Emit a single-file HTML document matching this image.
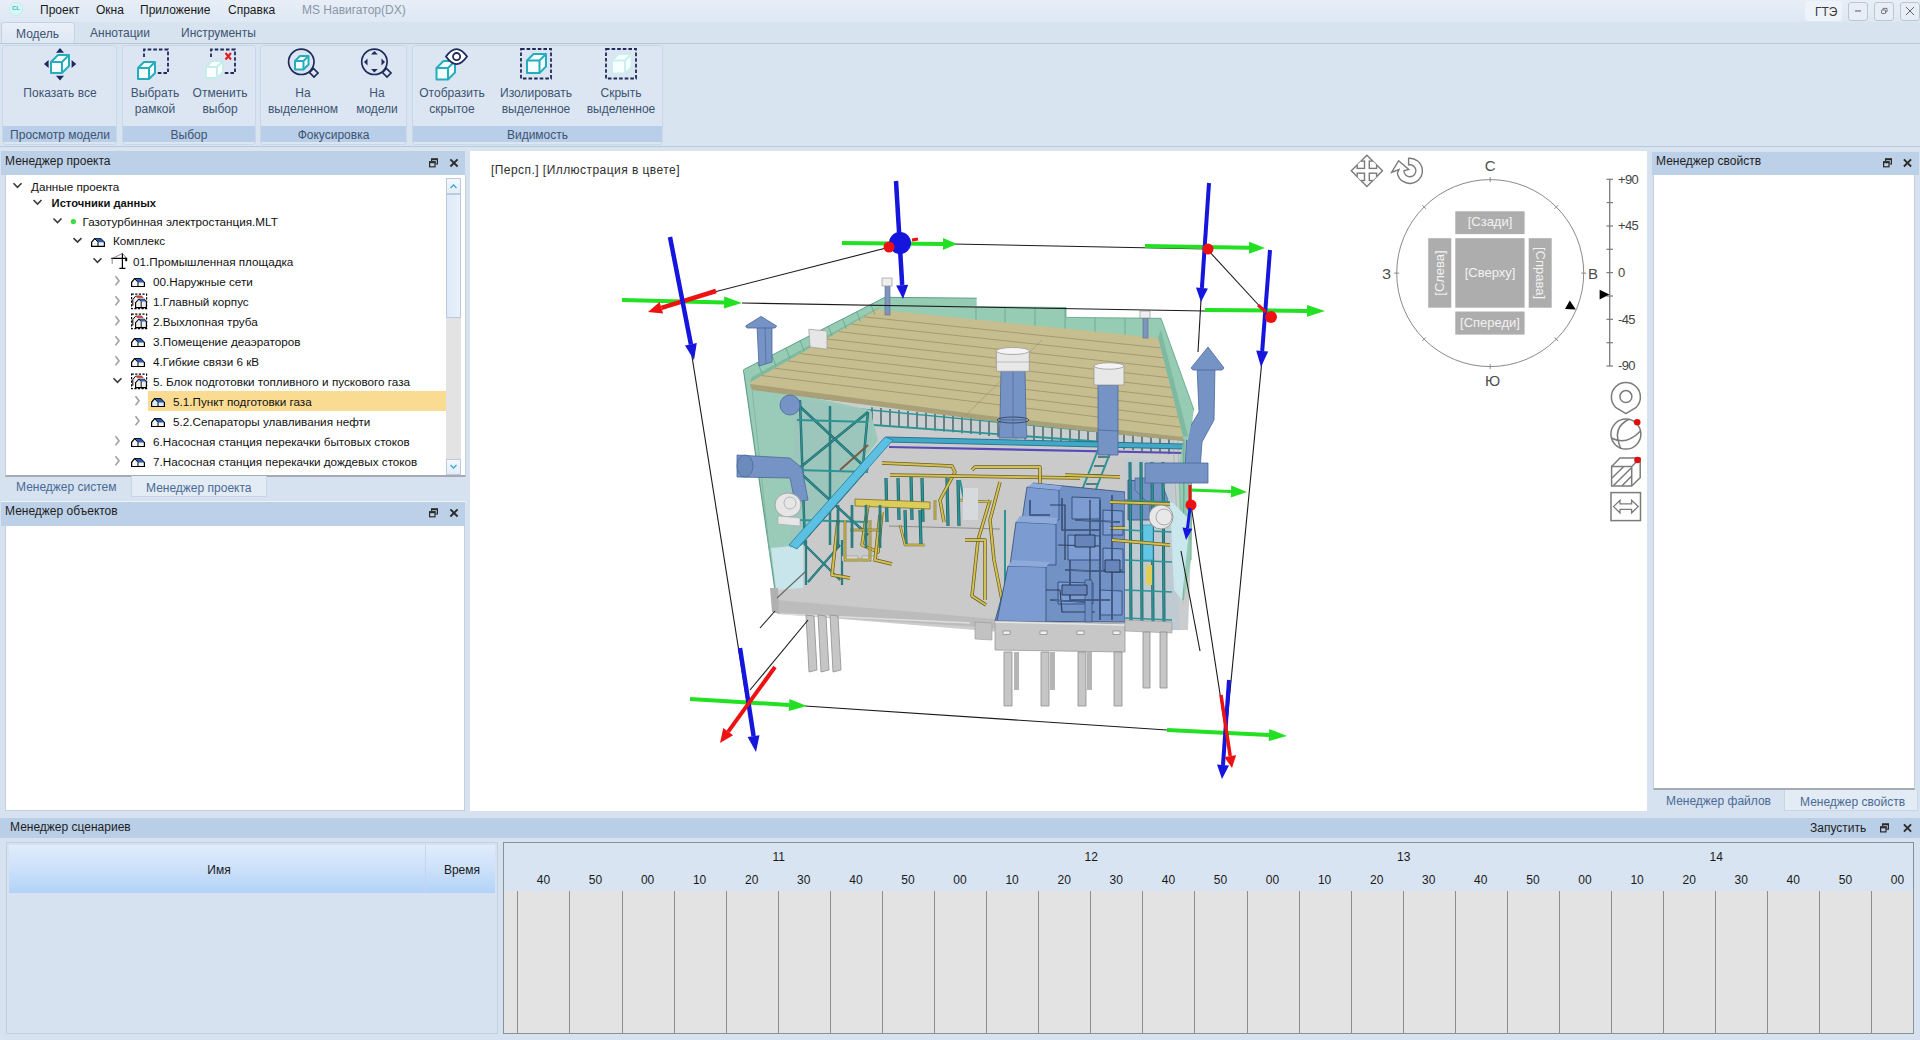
<!DOCTYPE html>
<html><head><meta charset="utf-8">
<style>
*{margin:0;padding:0;box-sizing:border-box}
html,body{width:1920px;height:1040px;overflow:hidden}
body{position:relative;background:#d6e2f0;font-family:"Liberation Sans",sans-serif;font-size:12px;color:#1e1e1e}
.a{position:absolute}
.t{position:absolute;white-space:nowrap;line-height:14px}
svg{position:absolute;overflow:visible}
</style></head><body>

<!-- title bar -->
<div class="a" style="left:0;top:0;width:1920px;height:22px;background:linear-gradient(#e8eef7,#dde8f4)"></div>
<div class="a" style="left:9px;top:2px;width:14px;height:14px;border-radius:50%;background:#d8f6f6;border:1px solid #bfeeee"></div>
<div class="t" style="left:12px;top:4px;font-size:6px;line-height:8px;color:#39b7c2;font-weight:bold">CL</div>
<div class="t" style="left:40px;top:3px;color:#1a1a1a">Проект</div>
<div class="t" style="left:96px;top:3px;color:#1a1a1a">Окна</div>
<div class="t" style="left:140px;top:3px;color:#1a1a1a">Приложение</div>
<div class="t" style="left:228px;top:3px;color:#1a1a1a">Справка</div>
<div class="t" style="left:302px;top:3px;color:#8a96a6">MS Навигатор(DX)</div>
<div class="a" style="left:1805px;top:1px;width:37px;height:20px;background:#eef3fa;border-radius:3px"></div>
<div class="t" style="left:1815px;top:5px;color:#3a3a3a">ГТЭ</div>
<div class="a" style="left:1848px;top:2px;width:20px;height:19px;border:1px solid #bcc6d1;border-radius:3px;background:#e8eef7"></div>
<div class="a" style="left:1874px;top:2px;width:20px;height:19px;border:1px solid #bcc6d1;border-radius:3px;background:#e8eef7"></div>
<div class="a" style="left:1900px;top:2px;width:20px;height:19px;border:1px solid #bcc6d1;border-radius:3px;background:#e8eef7"></div>

<!-- tab bar -->
<div class="a" style="left:0;top:22px;width:1920px;height:22px;background:#d8e3f0"></div>
<div class="a" style="left:1px;top:22px;width:74px;height:22px;background:linear-gradient(#e9eff8,#dde7f3);border:1px solid #c5d3e4;border-bottom:none;border-radius:3px 3px 0 0"></div>
<div class="t" style="left:16px;top:27px;color:#3d5472">Модель</div>
<div class="t" style="left:90px;top:26px;color:#3d5472">Аннотации</div>
<div class="t" style="left:181px;top:26px;color:#3d5472">Инструменты</div>

<!-- ribbon -->
<div class="a" style="left:0;top:43px;width:1920px;height:104px;background:#d9e4f1;border-top:1px solid #b8c9de;border-bottom:1px solid #b8c9de"></div>

<!-- RIBBON -->
<div class="a" style="left:2px;top:45px;width:115px;height:100px;background:#dbe6f2;border:1px solid #c9d7e8;border-radius:3px"></div>
<div class="a" style="left:3px;top:126px;width:113px;height:16px;background:#b9cee8"></div>
<div class="t" style="left:3px;width:114px;top:128px;text-align:center;color:#3d5472">Просмотр модели</div>
<div class="a" style="left:122px;top:45px;width:134px;height:100px;background:#dbe6f2;border:1px solid #c9d7e8;border-radius:3px"></div>
<div class="a" style="left:123px;top:126px;width:132px;height:16px;background:#b9cee8"></div>
<div class="t" style="left:122px;width:134px;top:128px;text-align:center;color:#3d5472">Выбор</div>
<div class="a" style="left:260px;top:45px;width:147px;height:100px;background:#dbe6f2;border:1px solid #c9d7e8;border-radius:3px"></div>
<div class="a" style="left:261px;top:126px;width:145px;height:16px;background:#b9cee8"></div>
<div class="t" style="left:260px;width:147px;top:128px;text-align:center;color:#3d5472">Фокусировка</div>
<div class="a" style="left:412px;top:45px;width:251px;height:100px;background:#dbe6f2;border:1px solid #c9d7e8;border-radius:3px"></div>
<div class="a" style="left:413px;top:126px;width:249px;height:16px;background:#b9cee8"></div>
<div class="t" style="left:412px;width:251px;top:128px;text-align:center;color:#3d5472">Видимость</div>
<svg style="left:0;top:0" width="700" height="150"><g opacity="1" stroke="#26adbb" stroke-width="2" stroke-linejoin="round" fill="#f4fdff">
<path d="M51 62L58 55H69V66L62 73H51Z"/>
<path d="M51 62H62V73M62 62L69 55" fill="none"/></g><g fill="#1f2a5a"><path d="M56 52.8L60 48L64 52.8Z"/><path d="M56 75.8L60 80.5L64 75.8Z"/><path d="M48.6 60L44 64L48.6 68Z"/><path d="M71.6 60L76.2 64L71.6 68Z"/></g><path d="M144 57V49.5H168V73H156" fill="none" stroke="#1f2a5a" stroke-width="1.8" stroke-dasharray="3.6 2"/><g opacity="1" stroke="#26adbb" stroke-width="2" stroke-linejoin="round" fill="#f4fdff">
<path d="M138 68L144 62H155V73L149 79H138Z"/>
<path d="M138 68H149V79M149 68L155 62" fill="none"/></g><path d="M211 57V49.5H235V73H223" fill="none" stroke="#1f2a5a" stroke-width="1.8" stroke-dasharray="3.6 2"/><g opacity="1" stroke="#c6ecec" stroke-width="2" stroke-linejoin="round" fill="#fbffff">
<path d="M206 67L212 61H223V72L217 78H206Z"/>
<path d="M206 67H217V78M217 67L223 61" fill="none"/></g><path d="M225.5 53L231 59.5M231 53L225.5 59.5" stroke="#e01c1c" stroke-width="2"/><circle cx="301.3" cy="61.8" r="12.7" fill="none" stroke="#1f2a5a" stroke-width="1.7"/><path d="M309.5 72.5L313.5 68.5L318 73L314 77Z" fill="none" stroke="#1f2a5a" stroke-width="1.7"/><g opacity="1" stroke="#26adbb" stroke-width="2" stroke-linejoin="round" fill="#f4fdff">
<path d="M295 61L300 56H308.5V64.5L303.5 69.5H295Z"/>
<path d="M295 61H303.5V69.5M303.5 61L308.5 56" fill="none"/></g><circle cx="374.4" cy="61.8" r="12.7" fill="none" stroke="#1f2a5a" stroke-width="1.7"/><path d="M382.5 72.5L386.5 68.5L391 73L387 77Z" fill="none" stroke="#1f2a5a" stroke-width="1.7"/><g fill="#1f2a5a"><path d="M371 54.5L374.4 51L377.8 54.5Z"/><path d="M371 69L374.4 72.5L377.8 69Z"/><path d="M367.5 58.5L364 62L367.5 65.5Z"/><path d="M381.5 58.5L385 62L381.5 65.5Z"/></g><g opacity="1" stroke="#26adbb" stroke-width="2" stroke-linejoin="round" fill="#f4fdff">
<path d="M436.5 68L443.5 61H455.0V72.5L448.0 79.5H436.5Z"/>
<path d="M436.5 68H448.0V79.5M448.0 68L455.0 61" fill="none"/></g><path d="M446 56.6Q456.5 41.5 467 56.6Q456.5 71.7 446 56.6Z" fill="#fff" stroke="#1f2a5a" stroke-width="1.8"/><circle cx="456.6" cy="56.6" r="3.6" fill="#fff" stroke="#1f2a5a" stroke-width="1.8"/><rect x="521" y="49" width="30" height="29.5" fill="none" stroke="#1f2a5a" stroke-width="1.8" stroke-dasharray="3.6 2"/><g opacity="1" stroke="#26adbb" stroke-width="2" stroke-linejoin="round" fill="#f4fdff">
<path d="M527 60.5L533.5 54.0H546.0V66.5L539.5 73.0H527Z"/>
<path d="M527 60.5H539.5V73.0M539.5 60.5L546.0 54.0" fill="none"/></g><rect x="606" y="49" width="30" height="29.5" fill="none" stroke="#1f2a5a" stroke-width="1.8" stroke-dasharray="3.6 2"/><g opacity="1" stroke="#cdeeee" stroke-width="2" stroke-linejoin="round" fill="#f7ffff">
<path d="M612 60.5L618.5 54.0H631.5V67.0L625 73.5H612Z"/>
<path d="M612 60.5H625V73.5M625 60.5L631.5 54.0" fill="none"/></g></svg>
<div class="t" style="left:10px;width:100px;text-align:center;top:86px;color:#3d5472">Показать все</div>
<div class="t" style="left:105px;width:100px;text-align:center;top:86px;color:#3d5472">Выбрать</div>
<div class="t" style="left:105px;width:100px;text-align:center;top:102px;color:#3d5472">рамкой</div>
<div class="t" style="left:170px;width:100px;text-align:center;top:86px;color:#3d5472">Отменить</div>
<div class="t" style="left:170px;width:100px;text-align:center;top:102px;color:#3d5472">выбор</div>
<div class="t" style="left:253px;width:100px;text-align:center;top:86px;color:#3d5472">На</div>
<div class="t" style="left:253px;width:100px;text-align:center;top:102px;color:#3d5472">выделенном</div>
<div class="t" style="left:327px;width:100px;text-align:center;top:86px;color:#3d5472">На</div>
<div class="t" style="left:327px;width:100px;text-align:center;top:102px;color:#3d5472">модели</div>
<div class="t" style="left:402px;width:100px;text-align:center;top:86px;color:#3d5472">Отобразить</div>
<div class="t" style="left:402px;width:100px;text-align:center;top:102px;color:#3d5472">скрытое</div>
<div class="t" style="left:486px;width:100px;text-align:center;top:86px;color:#3d5472">Изолировать</div>
<div class="t" style="left:486px;width:100px;text-align:center;top:102px;color:#3d5472">выделенное</div>
<div class="t" style="left:571px;width:100px;text-align:center;top:86px;color:#3d5472">Скрыть</div>
<div class="t" style="left:571px;width:100px;text-align:center;top:102px;color:#3d5472">выделенное</div>
<!-- /RIBBON -->
<!-- splitter band -->
<div class="a" style="left:0;top:147px;width:1920px;height:4px;background:#d9e4f1"></div>

<!-- left project manager -->
<div class="a" style="left:1px;top:151px;width:464px;height:24px;background:#bcd0e8"></div>
<div class="t" style="left:5px;top:154px">Менеджер проекта</div>
<div class="a" style="left:5px;top:175px;width:461px;height:302px;background:#fff;border:1px solid #c3d0de;border-top:none;border-bottom:2px solid #a3abb5"></div>

<!-- TREE -->
<div class="a" style="left:148px;top:391px;width:298px;height:20px;background:#f9dc91"></div>
<div class="t" style="left:31.0px;top:179.6px;color:#111;font-size:11.7px">Данные проекта</div>
<div class="t" style="left:51.6px;top:196.3px;font-weight:bold;color:#111;font-size:11.2px">Источники данных</div>
<div class="t" style="left:82.5px;top:214.8px;color:#111;font-size:11.7px">Газотурбинная электростанция.MLT</div>
<div class="t" style="left:113.0px;top:234.4px;color:#111;font-size:11.7px">Комплекс</div>
<div class="t" style="left:133.0px;top:254.6px;color:#111;font-size:11.7px">01.Промышленная площадка</div>
<div class="t" style="left:153.0px;top:274.6px;color:#111;font-size:11.7px">00.Наружные сети</div>
<div class="t" style="left:153.0px;top:294.6px;color:#111;font-size:11.7px">1.Главный корпус</div>
<div class="t" style="left:153.0px;top:314.6px;color:#111;font-size:11.7px">2.Выхлопная труба</div>
<div class="t" style="left:153.0px;top:334.6px;color:#111;font-size:11.7px">3.Помещение деаэраторов</div>
<div class="t" style="left:153.0px;top:354.6px;color:#111;font-size:11.7px">4.Гибкие связи 6 кВ</div>
<div class="t" style="left:153.0px;top:374.6px;color:#111;font-size:11.7px">5. Блок подготовки топливного и пускового газа</div>
<div class="t" style="left:173.0px;top:394.6px;color:#111;font-size:11.7px">5.1.Пункт подготовки газа</div>
<div class="t" style="left:173.0px;top:414.6px;color:#111;font-size:11.7px">5.2.Сепараторы улавливания нефти</div>
<div class="t" style="left:153.0px;top:434.6px;color:#111;font-size:11.7px">6.Насосная станция перекачки бытовых стоков</div>
<div class="t" style="left:153.0px;top:454.6px;color:#111;font-size:11.7px">7.Насосная станция перекачки дождевых стоков</div>
<div class="a" style="left:446px;top:178px;width:15px;height:297px;background:#e3e3e3"></div>
<div class="a" style="left:446px;top:178px;width:15px;height:16px;background:linear-gradient(#f4f8fd,#e4edf8);border:1px solid #bccbdd"></div>
<div class="a" style="left:446px;top:194px;width:15px;height:124px;background:linear-gradient(90deg,#dfeaf8,#e9f1fb);border:1px solid #b7c8df"></div>
<div class="a" style="left:446px;top:459px;width:15px;height:16px;background:linear-gradient(#f4f8fd,#e4edf8);border:1px solid #bccbdd"></div>
<svg style="left:0;top:0" width="470" height="480"><path d="M13.5 183.3L17.5 187.3L21.5 183.3" fill="none" stroke="#3a3a3a" stroke-width="1.6"/><path d="M33.5 200.0L37.5 204.0L41.5 200.0" fill="none" stroke="#3a3a3a" stroke-width="1.6"/><path d="M53.5 218.5L57.5 222.5L61.5 218.5" fill="none" stroke="#3a3a3a" stroke-width="1.6"/><circle cx="73.4" cy="221.6" r="2.6" fill="#3ddc3d"/><path d="M73.5 238.1L77.5 242.1L81.5 238.1" fill="none" stroke="#3a3a3a" stroke-width="1.6"/><g transform="translate(91.0 237.9)"><path d="M0.6 8.4V4.2L3.6 0.6H9.6L13.4 4.4V8.4Z" fill="#f4f4f4" stroke="#000" stroke-width="1.2"/><path d="M3.8 0.6H9.6L13.4 4.4H7.2Z" fill="#2b5aa8"/><path d="M7 4.4V8.4M3.6 0.6L7.2 4.4" stroke="#000" stroke-width="1"/></g><path d="M93.5 258.3L97.5 262.3L101.5 258.3" fill="none" stroke="#3a3a3a" stroke-width="1.6"/><g transform="translate(111 252.8)"><path d="M0.3 5.6H15.6M11.4 0.4V15.6M8.4 15.6H14.4" stroke="#000" stroke-width="1.2" fill="none"/><path d="M11.4 0.6L2 5.4M11.4 0.6L15.4 5.2M1.2 5.6V11" stroke="#666" stroke-width="0.8" fill="none"/><rect x="14.2" y="5" width="2" height="3.4" fill="#000"/></g><path d="M115.5 276.3L119 280.8L115.5 285.3" fill="none" stroke="#a0a0a0" stroke-width="1.6"/><g transform="translate(131.0 278.1)"><path d="M0.6 8.4V4.2L3.6 0.6H9.6L13.4 4.4V8.4Z" fill="#f4f4f4" stroke="#000" stroke-width="1.2"/><path d="M3.8 0.6H9.6L13.4 4.4H7.2Z" fill="#2b5aa8"/><path d="M7 4.4V8.4M3.6 0.6L7.2 4.4" stroke="#000" stroke-width="1"/></g><path d="M115.5 296.3L119 300.8L115.5 305.3" fill="none" stroke="#a0a0a0" stroke-width="1.6"/><g transform="translate(131.0 293.6)"><rect x="0.6" y="0.6" width="15" height="14.5" fill="none" stroke="#000" stroke-width="1.2" stroke-dasharray="2.2 1.4"/><path d="M1.8 12V6L4.6 2.6H10.6L12 4.2" fill="#f2f2f2" stroke="#000" stroke-width="1"/><path d="M4.8 2.6H10.6L12.2 4.4H6.4Z" fill="#e04848"/><path d="M4.6 14V9L7.8 5.6H13.2L15.4 8V14Z" fill="#eeeeee" stroke="#000" stroke-width="1.1"/><path d="M8 5.6H13.2L15.4 8H10.4Z" fill="#3566b8"/><path d="M10.2 8V14M7.8 5.6L10.3 8" stroke="#000" stroke-width="0.9"/></g><path d="M115.5 316.3L119 320.8L115.5 325.3" fill="none" stroke="#a0a0a0" stroke-width="1.6"/><g transform="translate(131.0 313.6)"><rect x="0.6" y="0.6" width="15" height="14.5" fill="none" stroke="#000" stroke-width="1.2" stroke-dasharray="2.2 1.4"/><path d="M1.8 12V6L4.6 2.6H10.6L12 4.2" fill="#f2f2f2" stroke="#000" stroke-width="1"/><path d="M4.8 2.6H10.6L12.2 4.4H6.4Z" fill="#e04848"/><path d="M4.6 14V9L7.8 5.6H13.2L15.4 8V14Z" fill="#eeeeee" stroke="#000" stroke-width="1.1"/><path d="M8 5.6H13.2L15.4 8H10.4Z" fill="#3566b8"/><path d="M10.2 8V14M7.8 5.6L10.3 8" stroke="#000" stroke-width="0.9"/></g><path d="M115.5 336.3L119 340.8L115.5 345.3" fill="none" stroke="#a0a0a0" stroke-width="1.6"/><g transform="translate(131.0 338.1)"><path d="M0.6 8.4V4.2L3.6 0.6H9.6L13.4 4.4V8.4Z" fill="#f4f4f4" stroke="#000" stroke-width="1.2"/><path d="M3.8 0.6H9.6L13.4 4.4H7.2Z" fill="#2b5aa8"/><path d="M7 4.4V8.4M3.6 0.6L7.2 4.4" stroke="#000" stroke-width="1"/></g><path d="M115.5 356.3L119 360.8L115.5 365.3" fill="none" stroke="#a0a0a0" stroke-width="1.6"/><g transform="translate(131.0 358.1)"><path d="M0.6 8.4V4.2L3.6 0.6H9.6L13.4 4.4V8.4Z" fill="#f4f4f4" stroke="#000" stroke-width="1.2"/><path d="M3.8 0.6H9.6L13.4 4.4H7.2Z" fill="#2b5aa8"/><path d="M7 4.4V8.4M3.6 0.6L7.2 4.4" stroke="#000" stroke-width="1"/></g><path d="M113.5 378.3L117.5 382.3L121.5 378.3" fill="none" stroke="#3a3a3a" stroke-width="1.6"/><g transform="translate(131.0 373.6)"><rect x="0.6" y="0.6" width="15" height="14.5" fill="none" stroke="#000" stroke-width="1.2" stroke-dasharray="2.2 1.4"/><path d="M1.8 12V6L4.6 2.6H10.6L12 4.2" fill="#f2f2f2" stroke="#000" stroke-width="1"/><path d="M4.8 2.6H10.6L12.2 4.4H6.4Z" fill="#e04848"/><path d="M4.6 14V9L7.8 5.6H13.2L15.4 8V14Z" fill="#eeeeee" stroke="#000" stroke-width="1.1"/><path d="M8 5.6H13.2L15.4 8H10.4Z" fill="#3566b8"/><path d="M10.2 8V14M7.8 5.6L10.3 8" stroke="#000" stroke-width="0.9"/></g><path d="M135.5 396.3L139 400.8L135.5 405.3" fill="none" stroke="#a0a0a0" stroke-width="1.6"/><g transform="translate(151.0 398.1)"><path d="M0.6 8.4V4.2L3.6 0.6H9.6L13.4 4.4V8.4Z" fill="#dce9f7" stroke="#000" stroke-width="1.2"/><path d="M3.8 0.6H9.6L13.4 4.4H7.2Z" fill="#2b5aa8"/><path d="M7 4.4V8.4M3.6 0.6L7.2 4.4" stroke="#000" stroke-width="1"/></g><path d="M135.5 416.3L139 420.8L135.5 425.3" fill="none" stroke="#a0a0a0" stroke-width="1.6"/><g transform="translate(151.0 418.1)"><path d="M0.6 8.4V4.2L3.6 0.6H9.6L13.4 4.4V8.4Z" fill="#f4f4f4" stroke="#000" stroke-width="1.2"/><path d="M3.8 0.6H9.6L13.4 4.4H7.2Z" fill="#2b5aa8"/><path d="M7 4.4V8.4M3.6 0.6L7.2 4.4" stroke="#000" stroke-width="1"/></g><path d="M115.5 436.3L119 440.8L115.5 445.3" fill="none" stroke="#a0a0a0" stroke-width="1.6"/><g transform="translate(131.0 438.1)"><path d="M0.6 8.4V4.2L3.6 0.6H9.6L13.4 4.4V8.4Z" fill="#f4f4f4" stroke="#000" stroke-width="1.2"/><path d="M3.8 0.6H9.6L13.4 4.4H7.2Z" fill="#2b5aa8"/><path d="M7 4.4V8.4M3.6 0.6L7.2 4.4" stroke="#000" stroke-width="1"/></g><path d="M115.5 456.3L119 460.8L115.5 465.3" fill="none" stroke="#a0a0a0" stroke-width="1.6"/><g transform="translate(131.0 458.1)"><path d="M0.6 8.4V4.2L3.6 0.6H9.6L13.4 4.4V8.4Z" fill="#f4f4f4" stroke="#000" stroke-width="1.2"/><path d="M3.8 0.6H9.6L13.4 4.4H7.2Z" fill="#2b5aa8"/><path d="M7 4.4V8.4M3.6 0.6L7.2 4.4" stroke="#000" stroke-width="1"/></g><path d="M450.5 188L453.5 185L456.5 188" fill="none" stroke="#3aa6d8" stroke-width="1.3"/><path d="M450.5 465L453.5 468L456.5 465" fill="none" stroke="#3aa6d8" stroke-width="1.3"/></svg>
<!-- /TREE -->
<!-- left tabs -->
<div class="a" style="left:131px;top:476px;width:136px;height:21px;background:#e3ebf5;border:1px solid #c8d5e5;border-top:none"></div>
<div class="t" style="left:16px;top:480px;color:#4a6a96">Менеджер систем</div>
<div class="t" style="left:146px;top:481px;color:#4a6a96">Менеджер проекта</div>

<!-- objects manager -->
<div class="a" style="left:1px;top:501px;width:465px;height:1px;background:#eef3f9"></div><div class="a" style="left:1px;top:502px;width:464px;height:24px;background:#bcd0e8"></div>
<div class="t" style="left:5px;top:504px">Менеджер объектов</div>
<div class="a" style="left:5px;top:526px;width:460px;height:285px;background:#fff;border:1px solid #c3d0de;border-top:none"></div>

<!-- viewport -->
<div class="a" style="left:470px;top:151px;width:1177px;height:660px;background:#fff"></div>

<!-- MODEL -->
<svg style="left:0;top:0" width="1920" height="1040"><polygon points="752.0,388.0 1185.0,438.0 1192.0,520.0 1188.0,630.0 1000.0,632.0 780.0,614.0 772.0,560.0" fill="#cbcccd"/><polygon points="860.0,404.0 1185.0,436.0 1185.0,446.0 860.0,424.0" fill="#c9cfd0"/><polyline points="872.0,407.2 872.0,424.2" fill="none" stroke="#1f3f40" stroke-width="1.3" stroke-linecap="butt" stroke-linejoin="round" opacity="0.85"/><polyline points="881.0,408.1 881.0,425.1" fill="none" stroke="#1f3f40" stroke-width="1.3" stroke-linecap="butt" stroke-linejoin="round" opacity="0.85"/><polyline points="890.0,409.0 890.0,426.0" fill="none" stroke="#1f3f40" stroke-width="1.3" stroke-linecap="butt" stroke-linejoin="round" opacity="0.85"/><polyline points="899.0,409.9 899.0,426.9" fill="none" stroke="#1f3f40" stroke-width="1.3" stroke-linecap="butt" stroke-linejoin="round" opacity="0.85"/><polyline points="908.0,410.8 908.0,427.8" fill="none" stroke="#1f3f40" stroke-width="1.3" stroke-linecap="butt" stroke-linejoin="round" opacity="0.85"/><polyline points="917.0,411.7 917.0,428.7" fill="none" stroke="#1f3f40" stroke-width="1.3" stroke-linecap="butt" stroke-linejoin="round" opacity="0.85"/><polyline points="926.0,412.6 926.0,429.6" fill="none" stroke="#1f3f40" stroke-width="1.3" stroke-linecap="butt" stroke-linejoin="round" opacity="0.85"/><polyline points="935.0,413.5 935.0,430.5" fill="none" stroke="#1f3f40" stroke-width="1.3" stroke-linecap="butt" stroke-linejoin="round" opacity="0.85"/><polyline points="944.0,414.4 944.0,431.4" fill="none" stroke="#1f3f40" stroke-width="1.3" stroke-linecap="butt" stroke-linejoin="round" opacity="0.85"/><polyline points="953.0,415.3 953.0,432.3" fill="none" stroke="#1f3f40" stroke-width="1.3" stroke-linecap="butt" stroke-linejoin="round" opacity="0.85"/><polyline points="962.0,416.2 962.0,433.2" fill="none" stroke="#1f3f40" stroke-width="1.3" stroke-linecap="butt" stroke-linejoin="round" opacity="0.85"/><polyline points="971.0,417.1 971.0,434.1" fill="none" stroke="#1f3f40" stroke-width="1.3" stroke-linecap="butt" stroke-linejoin="round" opacity="0.85"/><polyline points="980.0,418.0 980.0,435.0" fill="none" stroke="#1f3f40" stroke-width="1.3" stroke-linecap="butt" stroke-linejoin="round" opacity="0.85"/><polyline points="989.0,418.9 989.0,435.9" fill="none" stroke="#1f3f40" stroke-width="1.3" stroke-linecap="butt" stroke-linejoin="round" opacity="0.85"/><polyline points="998.0,419.8 998.0,436.8" fill="none" stroke="#1f3f40" stroke-width="1.3" stroke-linecap="butt" stroke-linejoin="round" opacity="0.85"/><polyline points="1007.0,420.7 1007.0,437.7" fill="none" stroke="#1f3f40" stroke-width="1.3" stroke-linecap="butt" stroke-linejoin="round" opacity="0.85"/><polyline points="1016.0,421.6 1016.0,438.6" fill="none" stroke="#1f3f40" stroke-width="1.3" stroke-linecap="butt" stroke-linejoin="round" opacity="0.85"/><polyline points="1025.0,422.5 1025.0,439.5" fill="none" stroke="#1f3f40" stroke-width="1.3" stroke-linecap="butt" stroke-linejoin="round" opacity="0.85"/><polyline points="1034.0,423.4 1034.0,440.4" fill="none" stroke="#1f3f40" stroke-width="1.3" stroke-linecap="butt" stroke-linejoin="round" opacity="0.85"/><polyline points="1043.0,424.3 1043.0,441.3" fill="none" stroke="#1f3f40" stroke-width="1.3" stroke-linecap="butt" stroke-linejoin="round" opacity="0.85"/><polyline points="1052.0,425.2 1052.0,442.2" fill="none" stroke="#1f3f40" stroke-width="1.3" stroke-linecap="butt" stroke-linejoin="round" opacity="0.85"/><polyline points="1061.0,426.1 1061.0,443.1" fill="none" stroke="#1f3f40" stroke-width="1.3" stroke-linecap="butt" stroke-linejoin="round" opacity="0.85"/><polyline points="1070.0,427.0 1070.0,444.0" fill="none" stroke="#1f3f40" stroke-width="1.3" stroke-linecap="butt" stroke-linejoin="round" opacity="0.85"/><polyline points="1079.0,427.9 1079.0,444.9" fill="none" stroke="#1f3f40" stroke-width="1.3" stroke-linecap="butt" stroke-linejoin="round" opacity="0.85"/><polyline points="1088.0,428.8 1088.0,445.8" fill="none" stroke="#1f3f40" stroke-width="1.3" stroke-linecap="butt" stroke-linejoin="round" opacity="0.85"/><polyline points="1097.0,429.7 1097.0,446.7" fill="none" stroke="#1f3f40" stroke-width="1.3" stroke-linecap="butt" stroke-linejoin="round" opacity="0.85"/><polyline points="1106.0,430.6 1106.0,447.6" fill="none" stroke="#1f3f40" stroke-width="1.3" stroke-linecap="butt" stroke-linejoin="round" opacity="0.85"/><polyline points="1115.0,431.5 1115.0,448.5" fill="none" stroke="#1f3f40" stroke-width="1.3" stroke-linecap="butt" stroke-linejoin="round" opacity="0.85"/><polyline points="1124.0,432.4 1124.0,449.4" fill="none" stroke="#1f3f40" stroke-width="1.3" stroke-linecap="butt" stroke-linejoin="round" opacity="0.85"/><polyline points="1133.0,433.3 1133.0,450.3" fill="none" stroke="#1f3f40" stroke-width="1.3" stroke-linecap="butt" stroke-linejoin="round" opacity="0.85"/><polyline points="1142.0,434.2 1142.0,451.2" fill="none" stroke="#1f3f40" stroke-width="1.3" stroke-linecap="butt" stroke-linejoin="round" opacity="0.85"/><polyline points="1151.0,435.1 1151.0,452.1" fill="none" stroke="#1f3f40" stroke-width="1.3" stroke-linecap="butt" stroke-linejoin="round" opacity="0.85"/><polyline points="1160.0,436.0 1160.0,453.0" fill="none" stroke="#1f3f40" stroke-width="1.3" stroke-linecap="butt" stroke-linejoin="round" opacity="0.85"/><polyline points="1169.0,436.9 1169.0,453.9" fill="none" stroke="#1f3f40" stroke-width="1.3" stroke-linecap="butt" stroke-linejoin="round" opacity="0.85"/><polyline points="860.0,409.0 1185.0,440.0" fill="none" stroke="#2d9496" stroke-width="1.3" stroke-linecap="butt" stroke-linejoin="round"/><polyline points="860.0,424.0 1185.0,448.0" fill="none" stroke="#2d9496" stroke-width="1.8" stroke-linecap="butt" stroke-linejoin="round"/><polyline points="800.0,395.0 1100.0,429.0" fill="none" stroke="#2d9496" stroke-width="3" stroke-linecap="butt" stroke-linejoin="round"/><polygon points="800.0,545.0 889.0,446.0 1130.0,458.0 1125.0,622.0 995.0,620.0 777.0,604.0" fill="#cacaca"/><polyline points="889.0,526.0 1000.0,529.0" fill="none" stroke="#8c8c8c" stroke-width="1" stroke-linecap="butt" stroke-linejoin="round"/><polygon points="886.0,437.0 1185.0,444.0 1185.0,449.0 886.0,442.0" fill="#43a8c8" stroke="#1f6f8a" stroke-width="0.9" stroke-linejoin="round"/><polyline points="889.0,447.0 1185.0,453.0" fill="none" stroke="#5a4ab8" stroke-width="2.2" stroke-linecap="butt" stroke-linejoin="round"/><polygon points="743.5,370.0 752.0,388.0 805.0,396.0 870.0,410.0 878.0,440.0 805.0,540.0 800.0,565.0 775.0,590.0" fill="#9acbb8"/><polyline points="743.5,370.0 775.0,590.0" fill="none" stroke="#5f9f88" stroke-width="1.2" stroke-linecap="butt" stroke-linejoin="round"/><polyline points="752.0,388.0 770.0,556.0" fill="none" stroke="#7fb3a0" stroke-width="0.8" stroke-linecap="butt" stroke-linejoin="round"/><polygon points="771.0,548.0 803.0,545.0 803.0,588.0 776.0,590.0" fill="#c7e5ea"/><polygon points="795.0,398.0 872.0,412.0 872.0,440.0 805.0,540.0 790.0,548.0" fill="#9cc6bb"/><polyline points="795.0,402.0 868.0,470.0" fill="none" stroke="#1d5f62" stroke-width="2.4" stroke-linecap="butt" stroke-linejoin="round"/><polyline points="795.0,402.0 868.0,470.0" fill="none" stroke="#2d9496" stroke-width="1.3" stroke-linecap="butt" stroke-linejoin="round"/><polyline points="868.0,412.0 797.0,470.0" fill="none" stroke="#1d5f62" stroke-width="2.4" stroke-linecap="butt" stroke-linejoin="round"/><polyline points="868.0,412.0 797.0,470.0" fill="none" stroke="#2d9496" stroke-width="1.3" stroke-linecap="butt" stroke-linejoin="round"/><polyline points="797.0,470.0 868.0,535.0" fill="none" stroke="#1d5f62" stroke-width="2.4" stroke-linecap="butt" stroke-linejoin="round"/><polyline points="797.0,470.0 868.0,535.0" fill="none" stroke="#2d9496" stroke-width="1.3" stroke-linecap="butt" stroke-linejoin="round"/><polyline points="866.0,470.0 800.0,545.0" fill="none" stroke="#1d5f62" stroke-width="2.4" stroke-linecap="butt" stroke-linejoin="round"/><polyline points="866.0,470.0 800.0,545.0" fill="none" stroke="#2d9496" stroke-width="1.3" stroke-linecap="butt" stroke-linejoin="round"/><polyline points="830.0,406.0 830.0,545.0" fill="none" stroke="#1d5f62" stroke-width="2.4" stroke-linecap="butt" stroke-linejoin="round"/><polyline points="830.0,406.0 830.0,545.0" fill="none" stroke="#2d9496" stroke-width="1.3" stroke-linecap="butt" stroke-linejoin="round"/><polyline points="800.0,400.0 805.0,545.0" fill="none" stroke="#1d5f62" stroke-width="2.4" stroke-linecap="butt" stroke-linejoin="round"/><polyline points="800.0,400.0 805.0,545.0" fill="none" stroke="#2d9496" stroke-width="1.3" stroke-linecap="butt" stroke-linejoin="round"/><polyline points="868.0,412.0 862.0,475.0" fill="none" stroke="#1d5f62" stroke-width="2.4" stroke-linecap="butt" stroke-linejoin="round"/><polyline points="868.0,412.0 862.0,475.0" fill="none" stroke="#2d9496" stroke-width="1.3" stroke-linecap="butt" stroke-linejoin="round"/><polyline points="797.0,420.0 868.0,422.0" fill="none" stroke="#2d9496" stroke-width="2" stroke-linecap="butt" stroke-linejoin="round"/><polyline points="797.0,470.0 868.0,472.0" fill="none" stroke="#2d9496" stroke-width="2" stroke-linecap="butt" stroke-linejoin="round"/><polyline points="797.0,520.0 868.0,522.0" fill="none" stroke="#2d9496" stroke-width="2" stroke-linecap="butt" stroke-linejoin="round"/><polyline points="805.0,545.0 840.0,580.0" fill="none" stroke="#1d5f62" stroke-width="2.2" stroke-linecap="butt" stroke-linejoin="round"/><polyline points="805.0,545.0 840.0,580.0" fill="none" stroke="#2d9496" stroke-width="1.2" stroke-linecap="butt" stroke-linejoin="round"/><polyline points="840.0,545.0 808.0,582.0" fill="none" stroke="#1d5f62" stroke-width="2.2" stroke-linecap="butt" stroke-linejoin="round"/><polyline points="840.0,545.0 808.0,582.0" fill="none" stroke="#2d9496" stroke-width="1.2" stroke-linecap="butt" stroke-linejoin="round"/><polyline points="806.0,540.0 806.0,585.0" fill="none" stroke="#1d5f62" stroke-width="2.2" stroke-linecap="butt" stroke-linejoin="round"/><polyline points="806.0,540.0 806.0,585.0" fill="none" stroke="#2d9496" stroke-width="1.2" stroke-linecap="butt" stroke-linejoin="round"/><polyline points="842.0,540.0 842.0,585.0" fill="none" stroke="#1d5f62" stroke-width="2.2" stroke-linecap="butt" stroke-linejoin="round"/><polyline points="842.0,540.0 842.0,585.0" fill="none" stroke="#2d9496" stroke-width="1.2" stroke-linecap="butt" stroke-linejoin="round"/><polygon points="842.0,556.0 858.0,556.0 858.0,561.0 842.0,561.0" fill="#d9d9d9" stroke="#999" stroke-width="0.6" stroke-linejoin="round"/><polygon points="862.0,556.0 878.0,556.0 878.0,561.0 862.0,561.0" fill="#d9d9d9" stroke="#999" stroke-width="0.6" stroke-linejoin="round"/><polyline points="840.0,470.0 868.0,445.0" fill="none" stroke="#7b5a4a" stroke-width="2" stroke-linecap="butt" stroke-linejoin="round"/><polygon points="789.0,545.0 885.0,437.0 893.0,440.0 797.0,549.0" fill="#5cc0e2" stroke="#2a85a6" stroke-width="0.9" stroke-linejoin="round"/><polygon points="777.0,600.0 995.0,619.0 995.0,628.0 779.0,614.0" fill="#bcbcbc"/><polygon points="770.0,588.0 778.0,588.0 779.0,614.0 772.0,612.0" fill="#b0b0b0"/><polyline points="777.0,598.0 805.0,572.0" fill="none" stroke="#6a6a6a" stroke-width="1.2" stroke-linecap="butt" stroke-linejoin="round"/><polyline points="781.0,614.0 970.0,623.0" fill="none" stroke="#dedede" stroke-width="1.4" stroke-linecap="butt" stroke-linejoin="round"/><polygon points="806.0,615.0 814.0,616.0 817.0,670.0 809.0,672.0" fill="#c6c6c6" stroke="#8e8e8e" stroke-width="0.8" stroke-linejoin="round"/><polygon points="818.0,615.0 826.0,616.0 829.0,670.0 821.0,672.0" fill="#c6c6c6" stroke="#8e8e8e" stroke-width="0.8" stroke-linejoin="round"/><polygon points="830.0,615.0 838.0,616.0 841.0,670.0 833.0,672.0" fill="#c6c6c6" stroke="#8e8e8e" stroke-width="0.8" stroke-linejoin="round"/><polygon points="975.0,622.0 992.0,623.0 992.0,640.0 975.0,639.0" fill="#c2c2c2" stroke="#999" stroke-width="0.6" stroke-linejoin="round"/><polyline points="886.0,478.0 887.0,522.0" fill="none" stroke="#1d5f62" stroke-width="3.2" stroke-linecap="butt" stroke-linejoin="round"/><polyline points="886.0,478.0 887.0,522.0" fill="none" stroke="#2d9496" stroke-width="1.8" stroke-linecap="butt" stroke-linejoin="round"/><polyline points="898.0,478.0 899.0,520.0" fill="none" stroke="#1d5f62" stroke-width="3.2" stroke-linecap="butt" stroke-linejoin="round"/><polyline points="898.0,478.0 899.0,520.0" fill="none" stroke="#2d9496" stroke-width="1.8" stroke-linecap="butt" stroke-linejoin="round"/><polyline points="911.0,476.0 912.0,520.0" fill="none" stroke="#1d5f62" stroke-width="3.2" stroke-linecap="butt" stroke-linejoin="round"/><polyline points="911.0,476.0 912.0,520.0" fill="none" stroke="#2d9496" stroke-width="1.8" stroke-linecap="butt" stroke-linejoin="round"/><polyline points="922.0,478.0 923.0,522.0" fill="none" stroke="#1d5f62" stroke-width="3.2" stroke-linecap="butt" stroke-linejoin="round"/><polyline points="922.0,478.0 923.0,522.0" fill="none" stroke="#2d9496" stroke-width="1.8" stroke-linecap="butt" stroke-linejoin="round"/><polyline points="947.0,478.0 948.0,526.0" fill="none" stroke="#1d5f62" stroke-width="3.2" stroke-linecap="butt" stroke-linejoin="round"/><polyline points="947.0,478.0 948.0,526.0" fill="none" stroke="#2d9496" stroke-width="1.8" stroke-linecap="butt" stroke-linejoin="round"/><polyline points="958.0,480.0 959.0,526.0" fill="none" stroke="#1d5f62" stroke-width="3.2" stroke-linecap="butt" stroke-linejoin="round"/><polyline points="958.0,480.0 959.0,526.0" fill="none" stroke="#2d9496" stroke-width="1.8" stroke-linecap="butt" stroke-linejoin="round"/><polyline points="905.0,510.0 906.0,545.0" fill="none" stroke="#1d5f62" stroke-width="3.2" stroke-linecap="butt" stroke-linejoin="round"/><polyline points="905.0,510.0 906.0,545.0" fill="none" stroke="#2d9496" stroke-width="1.8" stroke-linecap="butt" stroke-linejoin="round"/><polyline points="920.0,510.0 921.0,545.0" fill="none" stroke="#1d5f62" stroke-width="3.2" stroke-linecap="butt" stroke-linejoin="round"/><polyline points="920.0,510.0 921.0,545.0" fill="none" stroke="#2d9496" stroke-width="1.8" stroke-linecap="butt" stroke-linejoin="round"/><polyline points="882.0,463.0 952.0,466.0 955.0,472.0 940.0,500.0 944.0,522.0" fill="none" stroke="#6b5d1c" stroke-width="3.4" stroke-linecap="butt" stroke-linejoin="round"/><polyline points="882.0,463.0 952.0,466.0 955.0,472.0 940.0,500.0 944.0,522.0" fill="none" stroke="#d2c156" stroke-width="2.0" stroke-linecap="butt" stroke-linejoin="round"/><polyline points="890.0,475.0 1080.0,478.0" fill="none" stroke="#6b5d1c" stroke-width="3.4" stroke-linecap="butt" stroke-linejoin="round"/><polyline points="890.0,475.0 1080.0,478.0" fill="none" stroke="#d2c156" stroke-width="2.0" stroke-linecap="butt" stroke-linejoin="round"/><polyline points="972.0,470.0 975.0,467.0 1040.0,467.0 1040.0,510.0" fill="none" stroke="#6b5d1c" stroke-width="3.4" stroke-linecap="butt" stroke-linejoin="round"/><polyline points="972.0,470.0 975.0,467.0 1040.0,467.0 1040.0,510.0" fill="none" stroke="#d2c156" stroke-width="2.0" stroke-linecap="butt" stroke-linejoin="round"/><polygon points="855.0,499.0 930.0,502.0 930.0,509.0 855.0,506.0" fill="#dccc5a" stroke="#7d6e25" stroke-width="0.8" stroke-linejoin="round"/><polyline points="868.0,505.0 862.0,545.0 878.0,552.0 882.0,512.0" fill="none" stroke="#6b5d1c" stroke-width="3.4" stroke-linecap="butt" stroke-linejoin="round"/><polyline points="868.0,505.0 862.0,545.0 878.0,552.0 882.0,512.0" fill="none" stroke="#d2c156" stroke-width="2.0" stroke-linecap="butt" stroke-linejoin="round"/><polyline points="880.0,515.0 875.0,560.0 892.0,564.0" fill="none" stroke="#6b5d1c" stroke-width="3.4" stroke-linecap="butt" stroke-linejoin="round"/><polyline points="880.0,515.0 875.0,560.0 892.0,564.0" fill="none" stroke="#d2c156" stroke-width="2.0" stroke-linecap="butt" stroke-linejoin="round"/><polyline points="838.0,520.0 832.0,575.0 850.0,578.0" fill="none" stroke="#6b5d1c" stroke-width="3.4" stroke-linecap="butt" stroke-linejoin="round"/><polyline points="838.0,520.0 832.0,575.0 850.0,578.0" fill="none" stroke="#d2c156" stroke-width="2.0" stroke-linecap="butt" stroke-linejoin="round"/><polyline points="990.0,500.0 978.0,540.0 972.0,596.0 986.0,605.0" fill="none" stroke="#6b5d1c" stroke-width="3.4" stroke-linecap="butt" stroke-linejoin="round"/><polyline points="990.0,500.0 978.0,540.0 972.0,596.0 986.0,605.0" fill="none" stroke="#d2c156" stroke-width="2.0" stroke-linecap="butt" stroke-linejoin="round"/><polyline points="1000.0,482.0 990.0,520.0 994.0,560.0 1002.0,600.0" fill="none" stroke="#6b5d1c" stroke-width="3.4" stroke-linecap="butt" stroke-linejoin="round"/><polyline points="1000.0,482.0 990.0,520.0 994.0,560.0 1002.0,600.0" fill="none" stroke="#d2c156" stroke-width="2.0" stroke-linecap="butt" stroke-linejoin="round"/><polyline points="965.0,540.0 985.0,540.0 985.0,600.0" fill="none" stroke="#6b5d1c" stroke-width="3.4" stroke-linecap="butt" stroke-linejoin="round"/><polyline points="965.0,540.0 985.0,540.0 985.0,600.0" fill="none" stroke="#d2c156" stroke-width="2.0" stroke-linecap="butt" stroke-linejoin="round"/><polyline points="1005.0,510.0 1005.0,600.0" fill="none" stroke="#2d9496" stroke-width="2" stroke-linecap="butt" stroke-linejoin="round"/><polyline points="845.0,520.0 845.0,560.0 870.0,560.0 870.0,520.0" fill="none" stroke="#6d5f20" stroke-width="2.6" stroke-linecap="butt" stroke-linejoin="round"/><polyline points="845.0,520.0 845.0,560.0 870.0,560.0 870.0,520.0" fill="none" stroke="#d2c155" stroke-width="1.4" stroke-linecap="butt" stroke-linejoin="round"/><polyline points="850.0,530.0 880.0,530.0" fill="none" stroke="#6d5f20" stroke-width="2.6" stroke-linecap="butt" stroke-linejoin="round"/><polyline points="850.0,530.0 880.0,530.0" fill="none" stroke="#d2c155" stroke-width="1.4" stroke-linecap="butt" stroke-linejoin="round"/><polyline points="900.0,525.0 905.0,545.0 925.0,545.0" fill="none" stroke="#6d5f20" stroke-width="2.6" stroke-linecap="butt" stroke-linejoin="round"/><polyline points="900.0,525.0 905.0,545.0 925.0,545.0" fill="none" stroke="#d2c155" stroke-width="1.4" stroke-linecap="butt" stroke-linejoin="round"/><polyline points="935.0,500.0 935.0,520.0" fill="none" stroke="#6d5f20" stroke-width="2.6" stroke-linecap="butt" stroke-linejoin="round"/><polyline points="935.0,500.0 935.0,520.0" fill="none" stroke="#d2c155" stroke-width="1.4" stroke-linecap="butt" stroke-linejoin="round"/><polyline points="960.0,500.0 990.0,502.0" fill="none" stroke="#6d5f20" stroke-width="2.6" stroke-linecap="butt" stroke-linejoin="round"/><polyline points="960.0,500.0 990.0,502.0" fill="none" stroke="#d2c155" stroke-width="1.4" stroke-linecap="butt" stroke-linejoin="round"/><polyline points="838.0,505.0 838.0,548.0" fill="none" stroke="#1d5f62" stroke-width="2.6" stroke-linecap="butt" stroke-linejoin="round"/><polyline points="838.0,505.0 838.0,548.0" fill="none" stroke="#2d9496" stroke-width="1.2" stroke-linecap="butt" stroke-linejoin="round"/><polyline points="852.0,505.0 852.0,548.0" fill="none" stroke="#1d5f62" stroke-width="2.6" stroke-linecap="butt" stroke-linejoin="round"/><polyline points="852.0,505.0 852.0,548.0" fill="none" stroke="#2d9496" stroke-width="1.2" stroke-linecap="butt" stroke-linejoin="round"/><polyline points="866.0,505.0 866.0,548.0" fill="none" stroke="#1d5f62" stroke-width="2.6" stroke-linecap="butt" stroke-linejoin="round"/><polyline points="866.0,505.0 866.0,548.0" fill="none" stroke="#2d9496" stroke-width="1.2" stroke-linecap="butt" stroke-linejoin="round"/><polyline points="880.0,505.0 880.0,548.0" fill="none" stroke="#1d5f62" stroke-width="2.6" stroke-linecap="butt" stroke-linejoin="round"/><polyline points="880.0,505.0 880.0,548.0" fill="none" stroke="#2d9496" stroke-width="1.2" stroke-linecap="butt" stroke-linejoin="round"/><polyline points="960.0,480.0 968.0,520.0" fill="none" stroke="#2d9496" stroke-width="2" stroke-linecap="butt" stroke-linejoin="round"/><polygon points="963.0,488.0 978.0,488.0 978.0,520.0 963.0,520.0" fill="#d7dadc"/><polyline points="1070.0,520.0 1082.0,520.0" fill="none" stroke="#1d5f62" stroke-width="1.4" stroke-linecap="butt" stroke-linejoin="round"/><polyline points="1074.0,511.0 1086.0,511.0" fill="none" stroke="#1d5f62" stroke-width="1.4" stroke-linecap="butt" stroke-linejoin="round"/><polyline points="1078.0,502.0 1090.0,502.0" fill="none" stroke="#1d5f62" stroke-width="1.4" stroke-linecap="butt" stroke-linejoin="round"/><polyline points="1082.0,493.0 1094.0,493.0" fill="none" stroke="#1d5f62" stroke-width="1.4" stroke-linecap="butt" stroke-linejoin="round"/><polyline points="1086.0,484.0 1098.0,484.0" fill="none" stroke="#1d5f62" stroke-width="1.4" stroke-linecap="butt" stroke-linejoin="round"/><polyline points="1090.0,475.0 1102.0,475.0" fill="none" stroke="#1d5f62" stroke-width="1.4" stroke-linecap="butt" stroke-linejoin="round"/><polyline points="1094.0,466.0 1106.0,466.0" fill="none" stroke="#1d5f62" stroke-width="1.4" stroke-linecap="butt" stroke-linejoin="round"/><polyline points="1098.0,457.0 1110.0,457.0" fill="none" stroke="#1d5f62" stroke-width="1.4" stroke-linecap="butt" stroke-linejoin="round"/><polyline points="1068.0,525.0 1100.0,445.0" fill="none" stroke="#2d9496" stroke-width="2" stroke-linecap="butt" stroke-linejoin="round"/><polyline points="1082.0,525.0 1112.0,448.0" fill="none" stroke="#2d9496" stroke-width="2" stroke-linecap="butt" stroke-linejoin="round"/><polygon points="995.0,621.0 1033.0,483.0 1125.0,492.0 1125.0,622.0" fill="#7292c6" stroke="#2f4a78" stroke-width="0.8" stroke-linejoin="round"/><polygon points="1027.0,487.0 1059.0,490.0 1059.0,520.0 1022.0,520.0" fill="#7c9bd0" stroke="#2f4a78" stroke-width="0.8" stroke-linejoin="round"/><polygon points="1033.0,483.0 1062.0,486.0 1059.0,490.0 1027.0,487.0" fill="#8eaadb"/><polygon points="1016.0,522.0 1056.0,524.0 1056.0,565.0 1010.0,565.0" fill="#7c9bd0" stroke="#2f4a78" stroke-width="0.8" stroke-linejoin="round"/><polygon points="1008.0,566.0 1046.0,567.0 1046.0,622.0 997.0,621.0" fill="#7c9bd0" stroke="#2f4a78" stroke-width="0.8" stroke-linejoin="round"/><polygon points="1012.0,560.0 1050.0,562.0 1046.0,567.0 1008.0,566.0" fill="#8eaadb"/><polygon points="1020.0,516.0 1058.0,518.0 1056.0,524.0 1016.0,522.0" fill="#8eaadb"/><polygon points="1072.0,497.0 1100.0,498.0 1100.0,519.0 1072.0,519.0" fill="#7d9cd1" stroke="#2f4a78" stroke-width="0.9" stroke-linejoin="round"/><polygon points="1068.0,535.0 1100.0,536.0 1100.0,560.0 1068.0,560.0" fill="#7d9cd1" stroke="#2f4a78" stroke-width="0.9" stroke-linejoin="round"/><polygon points="1058.0,582.0 1093.0,583.0 1093.0,604.0 1058.0,604.0" fill="#7d9cd1" stroke="#2f4a78" stroke-width="0.9" stroke-linejoin="round"/><polygon points="1103.0,510.0 1123.0,511.0 1123.0,535.0 1103.0,535.0" fill="#7d9cd1" stroke="#2f4a78" stroke-width="0.9" stroke-linejoin="round"/><polygon points="1103.0,548.0 1123.0,549.0 1123.0,570.0 1103.0,570.0" fill="#7d9cd1" stroke="#2f4a78" stroke-width="0.9" stroke-linejoin="round"/><polygon points="1100.0,590.0 1122.0,591.0 1122.0,615.0 1100.0,615.0" fill="#7d9cd1" stroke="#2f4a78" stroke-width="0.9" stroke-linejoin="round"/><polyline points="1050.0,505.0 1065.0,505.0 1065.0,560.0" fill="none" stroke="#2e3f5c" stroke-width="1.2" stroke-linecap="butt" stroke-linejoin="round"/><polyline points="1046.0,590.0 1060.0,590.0 1062.0,612.0 1095.0,612.0" fill="none" stroke="#2e3f5c" stroke-width="1.2" stroke-linecap="butt" stroke-linejoin="round"/><polyline points="1058.0,545.0 1100.0,546.0" fill="none" stroke="#2e3f5c" stroke-width="1.2" stroke-linecap="butt" stroke-linejoin="round"/><polyline points="1090.0,500.0 1090.0,615.0" fill="none" stroke="#2e3f5c" stroke-width="1.2" stroke-linecap="butt" stroke-linejoin="round"/><polygon points="1085.0,580.0 1092.0,580.0 1092.0,622.0 1085.0,622.0" fill="#6f8fc2" stroke="#2f4a78" stroke-width="0.7" stroke-linejoin="round"/><polyline points="1065.0,475.0 1120.0,477.0" fill="none" stroke="#6b5d1c" stroke-width="3.4" stroke-linecap="butt" stroke-linejoin="round"/><polyline points="1065.0,475.0 1120.0,477.0" fill="none" stroke="#d2c156" stroke-width="2.0" stroke-linecap="butt" stroke-linejoin="round"/><polyline points="1110.0,528.0 1128.0,528.0" fill="none" stroke="#6b5d1c" stroke-width="3.4" stroke-linecap="butt" stroke-linejoin="round"/><polyline points="1110.0,528.0 1128.0,528.0" fill="none" stroke="#d2c156" stroke-width="2" stroke-linecap="butt" stroke-linejoin="round"/><polyline points="1062.0,498.0 1062.0,530.0 1100.0,530.0" fill="none" stroke="#1f2f4f" stroke-width="1.6" stroke-linecap="butt" stroke-linejoin="round"/><polyline points="1062.0,498.0 1062.0,530.0 1100.0,530.0" fill="none" stroke="#5d7fb5" stroke-width="0.8" stroke-linecap="butt" stroke-linejoin="round"/><polyline points="1070.0,560.0 1070.0,600.0 1110.0,600.0" fill="none" stroke="#1f2f4f" stroke-width="1.6" stroke-linecap="butt" stroke-linejoin="round"/><polyline points="1070.0,560.0 1070.0,600.0 1110.0,600.0" fill="none" stroke="#5d7fb5" stroke-width="0.8" stroke-linecap="butt" stroke-linejoin="round"/><polyline points="1100.0,500.0 1100.0,620.0" fill="none" stroke="#1f2f4f" stroke-width="1.6" stroke-linecap="butt" stroke-linejoin="round"/><polyline points="1100.0,500.0 1100.0,620.0" fill="none" stroke="#5d7fb5" stroke-width="0.8" stroke-linecap="butt" stroke-linejoin="round"/><polyline points="1112.0,495.0 1112.0,620.0" fill="none" stroke="#1f2f4f" stroke-width="1.6" stroke-linecap="butt" stroke-linejoin="round"/><polyline points="1112.0,495.0 1112.0,620.0" fill="none" stroke="#5d7fb5" stroke-width="0.8" stroke-linecap="butt" stroke-linejoin="round"/><polyline points="1075.0,520.0 1120.0,522.0" fill="none" stroke="#1f2f4f" stroke-width="1.6" stroke-linecap="butt" stroke-linejoin="round"/><polyline points="1075.0,520.0 1120.0,522.0" fill="none" stroke="#5d7fb5" stroke-width="0.8" stroke-linecap="butt" stroke-linejoin="round"/><polyline points="1065.0,570.0 1125.0,572.0" fill="none" stroke="#1f2f4f" stroke-width="1.6" stroke-linecap="butt" stroke-linejoin="round"/><polyline points="1065.0,570.0 1125.0,572.0" fill="none" stroke="#5d7fb5" stroke-width="0.8" stroke-linecap="butt" stroke-linejoin="round"/><polyline points="1050.0,600.0 1085.0,602.0" fill="none" stroke="#1f2f4f" stroke-width="1.6" stroke-linecap="butt" stroke-linejoin="round"/><polyline points="1050.0,600.0 1085.0,602.0" fill="none" stroke="#5d7fb5" stroke-width="0.8" stroke-linecap="butt" stroke-linejoin="round"/><polyline points="1030.0,500.0 1030.0,515.0 1050.0,515.0" fill="none" stroke="#1f2f4f" stroke-width="1.6" stroke-linecap="butt" stroke-linejoin="round"/><polyline points="1030.0,500.0 1030.0,515.0 1050.0,515.0" fill="none" stroke="#5d7fb5" stroke-width="0.8" stroke-linecap="butt" stroke-linejoin="round"/><polygon points="1075.0,535.0 1095.0,535.0 1095.0,547.0 1075.0,547.0" fill="#6785ba" stroke="#1f2f4f" stroke-width="0.9" stroke-linejoin="round"/><polygon points="1062.0,585.0 1087.0,585.0 1087.0,595.0 1062.0,595.0" fill="#6785ba" stroke="#1f2f4f" stroke-width="0.9" stroke-linejoin="round"/><polygon points="1105.0,560.0 1120.0,560.0 1120.0,572.0 1105.0,572.0" fill="#6785ba" stroke="#1f2f4f" stroke-width="0.9" stroke-linejoin="round"/><polygon points="995.0,621.0 1125.0,624.0 1125.0,652.0 995.0,650.0" fill="#c7c7c7" stroke="#999999" stroke-width="0.8" stroke-linejoin="round"/><polyline points="995.0,622.0 1125.0,625.0" fill="none" stroke="#e6e6e6" stroke-width="1.5" stroke-linecap="butt" stroke-linejoin="round"/><polygon points="1004.0,652.0 1012.0,652.0 1012.0,706.0 1004.0,706.0" fill="#c6c6c6" stroke="#8e8e8e" stroke-width="0.8" stroke-linejoin="round"/><polygon points="1041.0,652.0 1049.0,652.0 1049.0,706.0 1041.0,706.0" fill="#c6c6c6" stroke="#8e8e8e" stroke-width="0.8" stroke-linejoin="round"/><polygon points="1078.0,652.0 1086.0,652.0 1086.0,706.0 1078.0,706.0" fill="#c6c6c6" stroke="#8e8e8e" stroke-width="0.8" stroke-linejoin="round"/><polygon points="1114.0,652.0 1122.0,652.0 1122.0,706.0 1114.0,706.0" fill="#c6c6c6" stroke="#8e8e8e" stroke-width="0.8" stroke-linejoin="round"/><polygon points="1014.0,652.0 1019.0,652.0 1019.0,690.0 1014.0,690.0" fill="#b5b5b5"/><polygon points="1050.0,652.0 1055.0,652.0 1055.0,690.0 1050.0,690.0" fill="#b5b5b5"/><polygon points="1087.0,652.0 1092.0,652.0 1092.0,690.0 1087.0,690.0" fill="#b5b5b5"/><rect x="1003" y="631" width="7" height="3.5" fill="#f0f0f0" stroke="#777" stroke-width="0.6"/><rect x="1040" y="631" width="7" height="3.5" fill="#f0f0f0" stroke="#777" stroke-width="0.6"/><rect x="1077" y="631" width="7" height="3.5" fill="#f0f0f0" stroke="#777" stroke-width="0.6"/><rect x="1113" y="631" width="7" height="3.5" fill="#f0f0f0" stroke="#777" stroke-width="0.6"/><polygon points="1125.0,458.0 1172.0,462.0 1180.0,630.0 1125.0,630.0" fill="#bfcad2"/><polygon points="1128.0,480.0 1150.0,482.0 1150.0,520.0 1128.0,520.0" fill="#7292c6" stroke="#2f4a78" stroke-width="0.8" stroke-linejoin="round"/><polygon points="1135.0,478.0 1160.0,478.0 1168.0,500.0 1160.0,510.0 1145.0,500.0 1135.0,490.0" fill="#7593c4" stroke="#4a6899" stroke-width="0.8" stroke-linejoin="round"/><polyline points="1130.0,462.0 1131.0,622.0" fill="none" stroke="#1d5f62" stroke-width="3" stroke-linecap="butt" stroke-linejoin="round"/><polyline points="1130.0,462.0 1131.0,622.0" fill="none" stroke="#2d9496" stroke-width="1.6" stroke-linecap="butt" stroke-linejoin="round"/><polyline points="1141.0,462.0 1142.0,622.0" fill="none" stroke="#1d5f62" stroke-width="3" stroke-linecap="butt" stroke-linejoin="round"/><polyline points="1141.0,462.0 1142.0,622.0" fill="none" stroke="#2d9496" stroke-width="1.6" stroke-linecap="butt" stroke-linejoin="round"/><polyline points="1152.0,462.0 1153.0,622.0" fill="none" stroke="#1d5f62" stroke-width="3" stroke-linecap="butt" stroke-linejoin="round"/><polyline points="1152.0,462.0 1153.0,622.0" fill="none" stroke="#2d9496" stroke-width="1.6" stroke-linecap="butt" stroke-linejoin="round"/><polyline points="1163.0,462.0 1164.0,622.0" fill="none" stroke="#1d5f62" stroke-width="3" stroke-linecap="butt" stroke-linejoin="round"/><polyline points="1163.0,462.0 1164.0,622.0" fill="none" stroke="#2d9496" stroke-width="1.6" stroke-linecap="butt" stroke-linejoin="round"/><polyline points="1125.0,500.0 1172.0,502.0" fill="none" stroke="#2d9496" stroke-width="1.6" stroke-linecap="butt" stroke-linejoin="round"/><polyline points="1125.0,530.0 1172.0,532.0" fill="none" stroke="#2d9496" stroke-width="1.6" stroke-linecap="butt" stroke-linejoin="round"/><polyline points="1125.0,560.0 1172.0,562.0" fill="none" stroke="#2d9496" stroke-width="1.6" stroke-linecap="butt" stroke-linejoin="round"/><polyline points="1125.0,590.0 1172.0,592.0" fill="none" stroke="#2d9496" stroke-width="1.6" stroke-linecap="butt" stroke-linejoin="round"/><polyline points="1125.0,618.0 1172.0,620.0" fill="none" stroke="#2d9496" stroke-width="1.6" stroke-linecap="butt" stroke-linejoin="round"/><polygon points="1143.0,525.0 1153.0,525.0 1153.0,560.0 1143.0,560.0" fill="#63c5e4" stroke="#2c8bab" stroke-width="0.6" stroke-linejoin="round"/><polygon points="1146.0,565.0 1152.0,565.0 1152.0,585.0 1146.0,585.0" fill="#e0cd56"/><polyline points="1110.0,502.0 1170.0,504.0" fill="none" stroke="#6b5d1c" stroke-width="3.4" stroke-linecap="butt" stroke-linejoin="round"/><polyline points="1110.0,502.0 1170.0,504.0" fill="none" stroke="#d2c156" stroke-width="2" stroke-linecap="butt" stroke-linejoin="round"/><polyline points="1112.0,540.0 1170.0,545.0" fill="none" stroke="#6b5d1c" stroke-width="3.4" stroke-linecap="butt" stroke-linejoin="round"/><polyline points="1112.0,540.0 1170.0,545.0" fill="none" stroke="#d2c156" stroke-width="2" stroke-linecap="butt" stroke-linejoin="round"/><polygon points="1125.0,620.0 1172.0,622.0 1172.0,633.0 1125.0,631.0" fill="#c4c4c4" stroke="#999" stroke-width="0.6" stroke-linejoin="round"/><polygon points="1143.0,632.0 1150.0,632.0 1150.0,688.0 1143.0,688.0" fill="#c6c6c6" stroke="#8e8e8e" stroke-width="0.8" stroke-linejoin="round"/><polygon points="1160.0,632.0 1167.0,632.0 1167.0,688.0 1160.0,688.0" fill="#c6c6c6" stroke="#8e8e8e" stroke-width="0.8" stroke-linejoin="round"/><polygon points="1160.0,318.0 1192.0,410.0 1191.0,560.0 1183.0,605.0 1178.0,470.0 1184.0,438.0 1157.0,322.0" fill="#95ccb3"/><polyline points="1184.0,438.0 1183.0,600.0" fill="none" stroke="#5f9f88" stroke-width="0.8" stroke-linecap="butt" stroke-linejoin="round"/><polyline points="1160.0,318.0 1192.0,410.0 1191.0,560.0" fill="none" stroke="#5f9f88" stroke-width="0.8" stroke-linecap="butt" stroke-linejoin="round"/><polyline points="1172.0,420.0 1178.0,540.0" fill="none" stroke="#5f9f88" stroke-width="0.6" stroke-linecap="butt" stroke-linejoin="round" opacity="0.6"/><polyline points="1177.0,420.0 1182.0,540.0" fill="none" stroke="#5f9f88" stroke-width="0.6" stroke-linecap="butt" stroke-linejoin="round" opacity="0.6"/><polyline points="1182.0,420.0 1186.0,540.0" fill="none" stroke="#5f9f88" stroke-width="0.6" stroke-linecap="butt" stroke-linejoin="round" opacity="0.6"/><polyline points="1187.0,420.0 1190.0,540.0" fill="none" stroke="#5f9f88" stroke-width="0.6" stroke-linecap="butt" stroke-linejoin="round" opacity="0.6"/><polygon points="1170.0,500.0 1190.0,520.0 1182.0,600.0 1174.0,590.0" fill="#c9e7ec"/><polygon points="1197.0,366.0 1215.0,366.0 1214.0,420.0 1202.0,442.0 1200.0,470.0 1185.0,470.0 1187.0,432.0 1199.0,412.0" fill="#7593c4" stroke="#4a6899" stroke-width="0.8" stroke-linejoin="round"/><polygon points="1191.0,368.0 1208.0,347.0 1224.0,368.0 1222.0,370.0 1193.0,370.0" fill="#7593c4" stroke="#4a6899" stroke-width="0.8" stroke-linejoin="round"/><polygon points="1145.0,463.0 1208.0,463.0 1208.0,483.0 1145.0,483.0" fill="#7593c4" stroke="#4a6899" stroke-width="0.8" stroke-linejoin="round"/><ellipse cx="1161" cy="517" rx="12" ry="12" fill="#e8e8e8" stroke="#8a8a8a" stroke-width="0.8"/><ellipse cx="1164" cy="517" rx="8" ry="8" fill="none" stroke="#999" stroke-width="0.8"/><polygon points="743.5,369.7 884.9,297.3 976.7,298.2 976.7,306.8 1066.0,307.5 1066.0,317.4 1161.0,318.3 1194.0,410.0 1188.0,440.0 750.0,388.0" fill="#95ccb3"/><polyline points="743.5,369.7 884.9,297.3 976.7,298.2" fill="none" stroke="#5f9f88" stroke-width="1" stroke-linecap="butt" stroke-linejoin="round"/><polyline points="976.7,306.8 1066.0,307.5 1066.0,317.4 1161.0,318.3 1194.0,410.0" fill="none" stroke="#5f9f88" stroke-width="0.8" stroke-linecap="butt" stroke-linejoin="round"/><polygon points="749.4,383.0 877.0,309.5 883.0,305.0 752.0,377.0" fill="#7fb9a1"/><polygon points="1158.0,338.0 1183.0,437.0 1188.0,436.0 1161.0,330.0" fill="#7fb9a1"/><polygon points="749.4,383.0 877.0,309.5 1158.0,338.0 1183.0,437.0 990.0,416.0 750.0,385.0" fill="#c7be8f"/><polygon points="750.0,384.0 990.0,416.0 1183.0,437.0 1183.0,441.0 990.0,421.0 752.0,390.0" fill="#a9a078"/><polyline points="762.2,375.6 1180.5,427.1" fill="none" stroke="#8a8158" stroke-width="0.9" stroke-linecap="butt" stroke-linejoin="round" opacity="0.65"/><polyline points="774.9,368.3 1178.0,417.2" fill="none" stroke="#8a8158" stroke-width="0.9" stroke-linecap="butt" stroke-linejoin="round" opacity="0.65"/><polyline points="787.7,360.9 1175.5,407.3" fill="none" stroke="#8a8158" stroke-width="0.9" stroke-linecap="butt" stroke-linejoin="round" opacity="0.65"/><polyline points="800.4,353.6 1173.0,397.4" fill="none" stroke="#8a8158" stroke-width="0.9" stroke-linecap="butt" stroke-linejoin="round" opacity="0.65"/><polyline points="813.2,346.2 1170.5,387.5" fill="none" stroke="#8a8158" stroke-width="0.9" stroke-linecap="butt" stroke-linejoin="round" opacity="0.65"/><polyline points="826.0,338.9 1168.0,377.6" fill="none" stroke="#8a8158" stroke-width="0.9" stroke-linecap="butt" stroke-linejoin="round" opacity="0.65"/><polyline points="838.7,331.6 1165.5,367.7" fill="none" stroke="#8a8158" stroke-width="0.9" stroke-linecap="butt" stroke-linejoin="round" opacity="0.65"/><polyline points="851.5,324.2 1163.0,357.8" fill="none" stroke="#8a8158" stroke-width="0.9" stroke-linecap="butt" stroke-linejoin="round" opacity="0.65"/><polyline points="864.2,316.9 1160.5,347.9" fill="none" stroke="#8a8158" stroke-width="0.9" stroke-linecap="butt" stroke-linejoin="round" opacity="0.65"/><polyline points="1042.0,340.0 965.0,416.0" fill="none" stroke="#8a8158" stroke-width="0.7" stroke-linecap="butt" stroke-linejoin="round" opacity="0.6"/><polyline points="757.6,362.5 761.6,372.5" fill="none" stroke="#5f9f88" stroke-width="0.7" stroke-linecap="butt" stroke-linejoin="round"/><polyline points="771.8,355.2 775.8,365.2" fill="none" stroke="#5f9f88" stroke-width="0.7" stroke-linecap="butt" stroke-linejoin="round"/><polyline points="785.9,348.0 789.9,358.0" fill="none" stroke="#5f9f88" stroke-width="0.7" stroke-linecap="butt" stroke-linejoin="round"/><polyline points="800.1,340.7 804.1,350.7" fill="none" stroke="#5f9f88" stroke-width="0.7" stroke-linecap="butt" stroke-linejoin="round"/><polyline points="814.2,333.5 818.2,343.5" fill="none" stroke="#5f9f88" stroke-width="0.7" stroke-linecap="butt" stroke-linejoin="round"/><polyline points="828.3,326.3 832.3,336.3" fill="none" stroke="#5f9f88" stroke-width="0.7" stroke-linecap="butt" stroke-linejoin="round"/><polyline points="842.5,319.0 846.5,329.0" fill="none" stroke="#5f9f88" stroke-width="0.7" stroke-linecap="butt" stroke-linejoin="round"/><polyline points="856.6,311.8 860.6,321.8" fill="none" stroke="#5f9f88" stroke-width="0.7" stroke-linecap="butt" stroke-linejoin="round"/><polyline points="870.8,304.5 874.8,314.5" fill="none" stroke="#5f9f88" stroke-width="0.7" stroke-linecap="butt" stroke-linejoin="round"/><polyline points="976.0,307.0 976.0,319.5" fill="none" stroke="#5f9f88" stroke-width="0.7" stroke-linecap="butt" stroke-linejoin="round"/><polyline points="1005.0,307.0 1005.0,322.5" fill="none" stroke="#5f9f88" stroke-width="0.7" stroke-linecap="butt" stroke-linejoin="round"/><polyline points="1035.0,307.0 1035.0,325.5" fill="none" stroke="#5f9f88" stroke-width="0.7" stroke-linecap="butt" stroke-linejoin="round"/><polyline points="1065.0,307.0 1065.0,328.6" fill="none" stroke="#5f9f88" stroke-width="0.7" stroke-linecap="butt" stroke-linejoin="round"/><polyline points="1095.0,318.0 1095.0,331.6" fill="none" stroke="#5f9f88" stroke-width="0.7" stroke-linecap="butt" stroke-linejoin="round"/><polyline points="1125.0,318.0 1125.0,334.6" fill="none" stroke="#5f9f88" stroke-width="0.7" stroke-linecap="butt" stroke-linejoin="round"/><polygon points="757.0,326.0 772.0,326.0 772.0,362.0 759.0,366.0" fill="#7593c4" stroke="#4a6899" stroke-width="0.8" stroke-linejoin="round"/><polygon points="745.6,326.0 761.0,316.4 776.7,326.0 775.0,328.0 747.0,328.0" fill="#7593c4" stroke="#4a6899" stroke-width="0.8" stroke-linejoin="round"/><polyline points="765.0,327.0 766.0,364.0" fill="none" stroke="#4a6899" stroke-width="0.7" stroke-linecap="butt" stroke-linejoin="round"/><polygon points="808.8,329.3 827.0,331.0 827.0,349.2 810.0,347.0" fill="#e6e6e6" stroke="#a0a0a0" stroke-width="0.8" stroke-linejoin="round"/><rect x="885" y="285" width="5" height="30" fill="#7f95bd" stroke="#556c93" stroke-width="0.6"/><rect x="882" y="278" width="10" height="8" fill="#eeeeee" stroke="#888" stroke-width="0.6"/><rect x="1143" y="318" width="5" height="20" fill="#7f95bd" stroke="#556c93" stroke-width="0.6"/><rect x="1140" y="311" width="10" height="7" fill="#eeeeee" stroke="#888" stroke-width="0.6"/><polygon points="1001.0,371.0 1025.0,371.0 1026.0,420.0 1000.0,420.0" fill="#7593c4" stroke="#4a6899" stroke-width="0.8" stroke-linejoin="round"/><polygon points="1000.0,420.0 1026.0,420.0 1027.0,438.0 999.0,438.0" fill="#7593c4" stroke="#4a6899" stroke-width="0.8" stroke-linejoin="round"/><ellipse cx="1013" cy="420" rx="16" ry="3" fill="none" stroke="#2b3a55" stroke-width="0.8"/><polyline points="1013.0,371.0 1013.0,438.0" fill="none" stroke="#4a6899" stroke-width="0.7" stroke-linecap="butt" stroke-linejoin="round"/><polygon points="996.4,351.0 1029.3,351.0 1029.3,371.3 996.4,371.3" fill="#e8e8e8" stroke="#999" stroke-width="0.8" stroke-linejoin="round"/><ellipse cx="1012.8" cy="351" rx="16.5" ry="3.5" fill="#f4f4f4" stroke="#999" stroke-width="0.8"/><polyline points="996.4,362.0 1029.3,362.0" fill="none" stroke="#aaa" stroke-width="0.7" stroke-linecap="butt" stroke-linejoin="round"/><polygon points="1098.0,385.0 1118.0,385.0 1118.0,455.0 1098.0,455.0" fill="#7593c4" stroke="#4a6899" stroke-width="0.8" stroke-linejoin="round"/><polygon points="1094.0,366.0 1124.0,366.0 1124.0,385.0 1094.0,385.0" fill="#e8e8e8" stroke="#999" stroke-width="0.8" stroke-linejoin="round"/><ellipse cx="1109" cy="366" rx="15" ry="3.2" fill="#f4f4f4" stroke="#999" stroke-width="0.8"/><polyline points="1098.0,430.0 1118.0,431.0" fill="none" stroke="#4a6899" stroke-width="0.8" stroke-linecap="butt" stroke-linejoin="round"/><polygon points="737.0,455.0 790.0,458.0 802.0,468.0 808.0,500.0 795.0,502.0 790.0,478.0 737.0,477.0" fill="#7593c4" stroke="#4a6899" stroke-width="0.8" stroke-linejoin="round"/><ellipse cx="745" cy="466" rx="8" ry="11" fill="#6c8bbd" stroke="#4a6899" stroke-width="0.8"/><circle cx="790" cy="405" r="10" fill="#7593c4" stroke="#4a6899" stroke-width="0.8"/><ellipse cx="788" cy="505" rx="13" ry="12" fill="#e6e6e6" stroke="#999" stroke-width="0.8"/><ellipse cx="790" cy="503" rx="6" ry="6" fill="none" stroke="#aaa" stroke-width="0.8"/><polygon points="778.0,516.0 800.0,518.0 800.0,526.0 778.0,524.0" fill="#e6e6e6" stroke="#aaa" stroke-width="0.6" stroke-linejoin="round"/><polyline points="890.0,247.0 683.0,300.0" fill="none" stroke="#1a1a1a" stroke-width="1.1" stroke-linecap="butt" stroke-linejoin="round"/><polyline points="900.0,243.0 1207.0,249.0" fill="none" stroke="#1a1a1a" stroke-width="1.1" stroke-linecap="butt" stroke-linejoin="round"/><polyline points="742.0,303.0 1205.0,311.0" fill="none" stroke="#1a1a1a" stroke-width="1.1" stroke-linecap="butt" stroke-linejoin="round"/><polyline points="1207.0,249.0 1265.0,312.0" fill="none" stroke="#1a1a1a" stroke-width="1.1" stroke-linecap="butt" stroke-linejoin="round"/><polyline points="683.0,300.0 747.0,702.0" fill="none" stroke="#1a1a1a" stroke-width="1.1" stroke-linecap="butt" stroke-linejoin="round"/><polyline points="1262.0,360.0 1226.0,733.0" fill="none" stroke="#1a1a1a" stroke-width="1.1" stroke-linecap="butt" stroke-linejoin="round"/><polyline points="805.0,706.0 1167.0,730.0" fill="none" stroke="#1a1a1a" stroke-width="1.1" stroke-linecap="butt" stroke-linejoin="round"/><polyline points="1191.0,505.0 1226.0,733.0" fill="none" stroke="#1a1a1a" stroke-width="1.1" stroke-linecap="butt" stroke-linejoin="round"/><polyline points="1181.0,551.0 1200.0,651.0" fill="none" stroke="#1a1a1a" stroke-width="1.1" stroke-linecap="butt" stroke-linejoin="round"/><polyline points="808.0,620.0 750.0,690.0" fill="none" stroke="#1a1a1a" stroke-width="1.1" stroke-linecap="butt" stroke-linejoin="round"/><polyline points="760.0,628.0 775.0,611.0" fill="none" stroke="#1a1a1a" stroke-width="1.1" stroke-linecap="butt" stroke-linejoin="round"/><polyline points="1201.0,300.0 1198.0,352.0" fill="none" stroke="#1a1a1a" stroke-width="1.1" stroke-linecap="butt" stroke-linejoin="round"/><line x1="842" y1="243" x2="943.0" y2="243.9" stroke="#22e022" stroke-width="4"/><polygon points="957,244 942.9,249.9 943.1,237.9" fill="#22e022"/><line x1="896" y1="181" x2="902.2" y2="285.0" stroke="#1515dd" stroke-width="4.5"/><polygon points="903,299 896.2,285.4 908.2,284.7" fill="#1515dd"/><circle cx="900" cy="243" r="11" fill="#1515dd"/><circle cx="889" cy="247" r="5.5" fill="#ee1111"/><polyline points="912.0,240.0 918.0,239.0" fill="none" stroke="#ee1111" stroke-width="3" stroke-linecap="butt" stroke-linejoin="round"/><line x1="1145" y1="246" x2="1249.0" y2="247.7" stroke="#22e022" stroke-width="4"/><polygon points="1265,248 1248.9,253.7 1249.1,241.7" fill="#22e022"/><line x1="1209" y1="183" x2="1201.9" y2="288.0" stroke="#1515dd" stroke-width="4"/><polygon points="1201,302 1196.0,287.6 1207.9,288.4" fill="#1515dd"/><circle cx="1208" cy="249" r="5.5" fill="#ee1111"/><line x1="622" y1="300" x2="724.0" y2="302.6" stroke="#22e022" stroke-width="4"/><polygon points="742,303 723.9,308.5 724.2,296.6" fill="#22e022"/><line x1="716" y1="291" x2="661.4" y2="307.9" stroke="#ee1111" stroke-width="4.5"/><polygon points="648,312 659.6,302.1 663.1,313.6" fill="#ee1111"/><line x1="670" y1="237" x2="690.9" y2="344.3" stroke="#1515dd" stroke-width="4.5"/><polygon points="694,360 685.0,345.4 696.8,343.1" fill="#1515dd"/><line x1="1205" y1="310" x2="1307.0" y2="310.9" stroke="#22e022" stroke-width="4"/><polygon points="1325,311 1307.0,316.8 1307.1,304.9" fill="#22e022"/><line x1="1270" y1="250" x2="1262.2" y2="351.0" stroke="#1515dd" stroke-width="4"/><polygon points="1261,367 1256.2,350.6 1268.2,351.5" fill="#1515dd"/><circle cx="1271" cy="317" r="6" fill="#ee1111"/><polyline points="1258.0,305.0 1266.0,312.0" fill="none" stroke="#ee1111" stroke-width="3" stroke-linecap="butt" stroke-linejoin="round"/><line x1="1190" y1="490" x2="1231.0" y2="491.4" stroke="#22e022" stroke-width="3"/><polygon points="1247,492 1230.8,497.4 1231.2,485.4" fill="#22e022"/><polyline points="1190.0,485.0 1190.0,510.0" fill="none" stroke="#ee1111" stroke-width="3" stroke-linecap="butt" stroke-linejoin="round"/><circle cx="1191" cy="505" r="5.5" fill="#ee1111"/><line x1="1190" y1="508" x2="1187.5" y2="528.1" stroke="#1515dd" stroke-width="3"/><polygon points="1186,540 1182.5,527.5 1192.4,528.7" fill="#1515dd"/><line x1="690" y1="699" x2="789.0" y2="704.9" stroke="#22e022" stroke-width="4"/><polygon points="807,706 788.7,710.9 789.4,698.9" fill="#22e022"/><line x1="740" y1="648" x2="753.6" y2="736.2" stroke="#1515dd" stroke-width="4.5"/><polygon points="756,752 747.6,737.1 759.5,735.3" fill="#1515dd"/><line x1="775" y1="667" x2="728.2" y2="731.7" stroke="#ee1111" stroke-width="4"/><polygon points="720,743 723.3,728.1 733.1,735.2" fill="#ee1111"/><line x1="1167" y1="730" x2="1269.0" y2="735.1" stroke="#22e022" stroke-width="4"/><polygon points="1287,736 1268.7,741.1 1269.3,729.1" fill="#22e022"/><line x1="1229" y1="680" x2="1223.0" y2="765.0" stroke="#1515dd" stroke-width="4"/><polygon points="1222,779 1217.0,764.6 1229.0,765.5" fill="#1515dd"/><line x1="1221" y1="695" x2="1230.2" y2="756.1" stroke="#ee1111" stroke-width="3.5"/><polygon points="1232,768 1224.3,757.0 1236.1,755.2" fill="#ee1111"/></svg>
<!-- /MODEL -->
<!-- NAV -->
<div class="t" style="left:491px;top:163px;color:#2e2e2e;letter-spacing:0.45px">[Персп.] [Иллюстрация в цвете]</div>
<svg style="left:0;top:0" width="1920" height="1040"><g transform="translate(1366.9 170.8)" fill="#fff" stroke="#7b7b7b" stroke-width="1.4" stroke-linejoin="miter"><clipPath id="dclip"><path d="M0 -15.6L15.6 0L0 15.6L-15.6 0Z"/></clipPath><path d="M0 -15.6L15.6 0L0 15.6L-15.6 0Z"/><g clip-path="url(#dclip)"><rect x="2.4" y="-9.7" width="7.299999999999999" height="7.299999999999999"/><rect x="-9.7" y="-9.7" width="7.299999999999999" height="7.299999999999999"/><rect x="2.4" y="2.4" width="7.299999999999999" height="7.299999999999999"/><rect x="-9.7" y="2.4" width="7.299999999999999" height="7.299999999999999"/></g></g><path d="M1408.6 158.3A12.6 12.6 0 1 1 1397.4 173.3L1399 169.5L1391.6 172.4L1398.6 160.7L1408.8 169.5L1403.9 170.8A6 6 0 1 0 1408.6 164.9Z" fill="#fff" stroke="#7b7b7b" stroke-width="1.4" stroke-linejoin="miter"/><circle cx="1490.2" cy="273.1" r="93.5" fill="none" stroke="#8a8a8a" stroke-width="1"/><line x1="1581.2" y1="273.1" x2="1586.2" y2="273.1" stroke="#8a8a8a" stroke-width="1"/><line x1="1554.5" y1="337.4" x2="1558.1" y2="341.0" stroke="#8a8a8a" stroke-width="1"/><line x1="1490.2" y1="364.1" x2="1490.2" y2="369.1" stroke="#8a8a8a" stroke-width="1"/><line x1="1425.9" y1="337.4" x2="1422.3" y2="341.0" stroke="#8a8a8a" stroke-width="1"/><line x1="1399.2" y1="273.1" x2="1394.2" y2="273.1" stroke="#8a8a8a" stroke-width="1"/><line x1="1425.9" y1="208.8" x2="1422.3" y2="205.2" stroke="#8a8a8a" stroke-width="1"/><line x1="1490.2" y1="182.1" x2="1490.2" y2="177.1" stroke="#8a8a8a" stroke-width="1"/><line x1="1554.5" y1="208.8" x2="1558.1" y2="205.2" stroke="#8a8a8a" stroke-width="1"/><rect x="1455.3" y="211.3" width="69.3" height="22.8" fill="#adadad"/><rect x="1455.3" y="238.2" width="69.3" height="69.5" fill="#adadad"/><rect x="1455.3" y="311.5" width="69.3" height="23.1" fill="#adadad"/><rect x="1428.2" y="238.2" width="23.1" height="69.5" fill="#adadad"/><rect x="1528.7" y="238.2" width="23" height="69.5" fill="#adadad"/><path d="M1565 309L1569.8 300.5L1575.8 309.4Z" fill="#000"/><line x1="1609.7" y1="179.3" x2="1609.7" y2="366" stroke="#7b7b7b" stroke-width="1.3"/><line x1="1606.5" y1="179.3" x2="1613" y2="179.3" stroke="#7b7b7b" stroke-width="1.2"/><line x1="1606.5" y1="202.6" x2="1613" y2="202.6" stroke="#7b7b7b" stroke-width="1.2"/><line x1="1606.5" y1="226.0" x2="1613" y2="226.0" stroke="#7b7b7b" stroke-width="1.2"/><line x1="1606.5" y1="249.3" x2="1613" y2="249.3" stroke="#7b7b7b" stroke-width="1.2"/><line x1="1606.5" y1="272.6" x2="1613" y2="272.6" stroke="#7b7b7b" stroke-width="1.2"/><line x1="1606.5" y1="296.0" x2="1613" y2="296.0" stroke="#7b7b7b" stroke-width="1.2"/><line x1="1606.5" y1="319.3" x2="1613" y2="319.3" stroke="#7b7b7b" stroke-width="1.2"/><line x1="1606.5" y1="342.7" x2="1613" y2="342.7" stroke="#7b7b7b" stroke-width="1.2"/><line x1="1606.5" y1="366.0" x2="1613" y2="366.0" stroke="#7b7b7b" stroke-width="1.2"/><path d="M1599.6 289.8L1599.6 299.4L1609.4 294.6Z" fill="#000"/><path d="M1615.6 407.3A14.5 14.5 0 1 1 1636.2 407.3L1625.9 413.6Z" fill="#fff" stroke="#7b7b7b" stroke-width="1.5" stroke-linejoin="round"/><circle cx="1625.9" cy="396.6" r="6" fill="none" stroke="#7b7b7b" stroke-width="1.5"/><circle cx="1625.9" cy="434.1" r="15" fill="#fff" stroke="#7b7b7b" stroke-width="1.5"/><path d="M1629 419.3Q1611 428 1621 448.8M1611.5 438Q1626 446 1640.5 431" fill="none" stroke="#7b7b7b" stroke-width="1.5"/><circle cx="1637.2" cy="422.3" r="3.3" fill="#e00e0e"/><g fill="none" stroke="#7b7b7b" stroke-width="1.5" stroke-linejoin="round"><path d="M1611.6 466.5L1620 458H1640.2V477.7L1631.7 486H1611.6Z"/><path d="M1611.6 466.5H1631.7V486M1631.7 466.5L1640.2 458"/><path d="M1612 478L1623.5 466.8M1613.5 485.5L1631.5 467.8M1622 485.7L1631.5 476.3"/></g><circle cx="1637.5" cy="460" r="3.3" fill="#e00e0e"/><rect x="1611" y="492.6" width="29.5" height="28" fill="#fff" stroke="#7b7b7b" stroke-width="1.5"/><path d="M1613.5 506.6L1620 500.3V503.8H1631.6V500.3L1638.2 506.6L1631.6 512.9V509.4H1620V512.9Z" fill="#fff" stroke="#7b7b7b" stroke-width="1.3" stroke-linejoin="miter"/></svg>
<div class="t" style="left:1475.2px;width:30px;text-align:center;top:156.5px;font-size:15px;line-height:17px;color:#4d4d4d">С</div>
<div class="t" style="left:1371.5px;width:30px;text-align:center;top:264.5px;font-size:15px;line-height:17px;color:#4d4d4d">З</div>
<div class="t" style="left:1578px;width:30px;text-align:center;top:264.5px;font-size:15px;line-height:17px;color:#4d4d4d">В</div>
<div class="t" style="left:1477.6px;width:30px;text-align:center;top:371.8px;font-size:15px;line-height:17px;color:#4d4d4d">Ю</div>
<div class="t" style="left:1455px;width:70px;text-align:center;top:214px;font-size:13px;line-height:16px;color:#f2f2f2">[Сзади]</div>
<div class="t" style="left:1455px;width:70px;text-align:center;top:265px;font-size:13px;line-height:16px;color:#f2f2f2">[Сверху]</div>
<div class="t" style="left:1455px;width:70px;text-align:center;top:315px;font-size:13px;line-height:16px;color:#f2f2f2">[Спереди]</div>
<div class="t" style="left:1405px;width:70px;text-align:center;top:265px;font-size:13px;line-height:16px;color:#f2f2f2;transform:rotate(-90deg)">[Слева]</div>
<div class="t" style="left:1505px;width:70px;text-align:center;top:265px;font-size:13px;line-height:16px;color:#f2f2f2;transform:rotate(90deg)">[Справа]</div>
<div class="t" style="left:1618px;top:171.5px;font-size:13px;line-height:16px;letter-spacing:-0.6px;color:#444">+90</div>
<div class="t" style="left:1618px;top:218px;font-size:13px;line-height:16px;letter-spacing:-0.6px;color:#444">+45</div>
<div class="t" style="left:1618px;top:265px;font-size:13px;line-height:16px;letter-spacing:-0.6px;color:#444">0</div>
<div class="t" style="left:1618px;top:311.5px;font-size:13px;line-height:16px;letter-spacing:-0.6px;color:#444">-45</div>
<div class="t" style="left:1618px;top:358px;font-size:13px;line-height:16px;letter-spacing:-0.6px;color:#444">-90</div>
<!-- /NAV -->
<!-- right panel -->
<div class="a" style="left:1652px;top:152px;width:267px;height:23px;background:#bcd0e8"></div>
<div class="t" style="left:1656px;top:154px">Менеджер свойств</div>
<div class="a" style="left:1653px;top:175px;width:262px;height:615px;background:#fff;border:1px solid #c3d0de;border-top:none;border-bottom:2px solid #a3abb5"></div>
<div class="a" style="left:1784px;top:790px;width:134px;height:21px;background:#e3ebf5;border:1px solid #c8d5e5;border-top:none"></div>
<div class="t" style="left:1666px;top:794px;color:#4a6a96">Менеджер файлов</div>
<div class="t" style="left:1800px;top:795px;color:#4a6a96">Менеджер свойств</div>

<!-- scenario manager -->
<div class="a" style="left:0;top:818px;width:1920px;height:20px;background:#b9cee7"></div>
<div class="t" style="left:10px;top:820px">Менеджер сценариев</div>
<div class="t" style="left:1810px;top:821px">Запустить</div>
<!-- TIMELINE -->
<div class="a" style="left:6px;top:842px;width:492px;height:192px;border:1px solid #c3cfdd"></div>
<div class="a" style="left:9px;top:845px;width:486px;height:48px;background:linear-gradient(#e0ecfb,#cfe2fa 45%,#b2d2f8)"></div>
<div class="a" style="left:425px;top:845px;width:1px;height:48px;background:#c6d6ea"></div>
<div class="t" style="left:169px;width:100px;text-align:center;top:863px;color:#1a1a1a">Имя</div>
<div class="t" style="left:412px;width:100px;text-align:center;top:863px;color:#1a1a1a">Время</div>
<div class="a" style="left:503px;top:842px;width:1411px;height:192px;border:1px solid #8a9099;background:#d8e4f1"></div>
<div class="a" style="left:504px;top:891px;width:1409px;height:142px;background:#e3e3e3"></div>
<svg style="left:0;top:0" width="1920" height="1040"><rect x="517" y="891" width="1" height="142" fill="#8e8e8e"/><rect x="569" y="891" width="1" height="142" fill="#8e8e8e"/><rect x="622" y="891" width="1" height="142" fill="#8e8e8e"/><rect x="674" y="891" width="1" height="142" fill="#8e8e8e"/><rect x="726" y="891" width="1" height="142" fill="#8e8e8e"/><rect x="778" y="891" width="1" height="142" fill="#8e8e8e"/><rect x="830" y="891" width="1" height="142" fill="#8e8e8e"/><rect x="882" y="891" width="1" height="142" fill="#8e8e8e"/><rect x="934" y="891" width="1" height="142" fill="#8e8e8e"/><rect x="986" y="891" width="1" height="142" fill="#8e8e8e"/><rect x="1038" y="891" width="1" height="142" fill="#8e8e8e"/><rect x="1090" y="891" width="1" height="142" fill="#8e8e8e"/><rect x="1142" y="891" width="1" height="142" fill="#8e8e8e"/><rect x="1194" y="891" width="1" height="142" fill="#8e8e8e"/><rect x="1247" y="891" width="1" height="142" fill="#8e8e8e"/><rect x="1299" y="891" width="1" height="142" fill="#8e8e8e"/><rect x="1351" y="891" width="1" height="142" fill="#8e8e8e"/><rect x="1403" y="891" width="1" height="142" fill="#8e8e8e"/><rect x="1455" y="891" width="1" height="142" fill="#8e8e8e"/><rect x="1507" y="891" width="1" height="142" fill="#8e8e8e"/><rect x="1559" y="891" width="1" height="142" fill="#8e8e8e"/><rect x="1611" y="891" width="1" height="142" fill="#8e8e8e"/><rect x="1663" y="891" width="1" height="142" fill="#8e8e8e"/><rect x="1715" y="891" width="1" height="142" fill="#8e8e8e"/><rect x="1767" y="891" width="1" height="142" fill="#8e8e8e"/><rect x="1819" y="891" width="1" height="142" fill="#8e8e8e"/><rect x="1871" y="891" width="1" height="142" fill="#8e8e8e"/></svg>
<div class="t" style="left:523.4px;width:40px;text-align:center;top:873px;color:#1a1a1a">40</div>
<div class="t" style="left:575.5px;width:40px;text-align:center;top:873px;color:#1a1a1a">50</div>
<div class="t" style="left:627.6px;width:40px;text-align:center;top:873px;color:#1a1a1a">00</div>
<div class="t" style="left:679.6px;width:40px;text-align:center;top:873px;color:#1a1a1a">10</div>
<div class="t" style="left:731.7px;width:40px;text-align:center;top:873px;color:#1a1a1a">20</div>
<div class="t" style="left:783.8px;width:40px;text-align:center;top:873px;color:#1a1a1a">30</div>
<div class="t" style="left:835.9px;width:40px;text-align:center;top:873px;color:#1a1a1a">40</div>
<div class="t" style="left:888.0px;width:40px;text-align:center;top:873px;color:#1a1a1a">50</div>
<div class="t" style="left:940.0px;width:40px;text-align:center;top:873px;color:#1a1a1a">00</div>
<div class="t" style="left:992.1px;width:40px;text-align:center;top:873px;color:#1a1a1a">10</div>
<div class="t" style="left:1044.2px;width:40px;text-align:center;top:873px;color:#1a1a1a">20</div>
<div class="t" style="left:1096.3px;width:40px;text-align:center;top:873px;color:#1a1a1a">30</div>
<div class="t" style="left:1148.4px;width:40px;text-align:center;top:873px;color:#1a1a1a">40</div>
<div class="t" style="left:1200.4px;width:40px;text-align:center;top:873px;color:#1a1a1a">50</div>
<div class="t" style="left:1252.5px;width:40px;text-align:center;top:873px;color:#1a1a1a">00</div>
<div class="t" style="left:1304.6px;width:40px;text-align:center;top:873px;color:#1a1a1a">10</div>
<div class="t" style="left:1356.7px;width:40px;text-align:center;top:873px;color:#1a1a1a">20</div>
<div class="t" style="left:1408.8px;width:40px;text-align:center;top:873px;color:#1a1a1a">30</div>
<div class="t" style="left:1460.8px;width:40px;text-align:center;top:873px;color:#1a1a1a">40</div>
<div class="t" style="left:1512.9px;width:40px;text-align:center;top:873px;color:#1a1a1a">50</div>
<div class="t" style="left:1565.0px;width:40px;text-align:center;top:873px;color:#1a1a1a">00</div>
<div class="t" style="left:1617.1px;width:40px;text-align:center;top:873px;color:#1a1a1a">10</div>
<div class="t" style="left:1669.2px;width:40px;text-align:center;top:873px;color:#1a1a1a">20</div>
<div class="t" style="left:1721.2px;width:40px;text-align:center;top:873px;color:#1a1a1a">30</div>
<div class="t" style="left:1773.3px;width:40px;text-align:center;top:873px;color:#1a1a1a">40</div>
<div class="t" style="left:1825.4px;width:40px;text-align:center;top:873px;color:#1a1a1a">50</div>
<div class="t" style="left:1877.5px;width:40px;text-align:center;top:873px;color:#1a1a1a">00</div>
<div class="t" style="left:758.8px;width:40px;text-align:center;top:850px;color:#1a1a1a">11</div>
<div class="t" style="left:1071.2px;width:40px;text-align:center;top:850px;color:#1a1a1a">12</div>
<div class="t" style="left:1383.8px;width:40px;text-align:center;top:850px;color:#1a1a1a">13</div>
<div class="t" style="left:1696.2px;width:40px;text-align:center;top:850px;color:#1a1a1a">14</div>
<!-- /TIMELINE -->
<!-- ICONS -->
<svg style="left:0;top:0" width="1920" height="1040"><g fill="none" stroke="#2b2b2b" stroke-width="1.2"><path d="M431.6 160.9V159.0H437.4V164.0H435.2" /><rect x="429.6" y="161.8" width="5.4" height="5"/></g><rect x="431" y="158.4" width="7" height="1.8" fill="#2b2b2b"/><rect x="429" y="161.4" width="6.6" height="1.8" fill="#2b2b2b"/><path d="M450.4 159.3L457.6 166.5M457.6 159.3L450.4 166.5" stroke="#2b2b2b" stroke-width="1.9"/><g fill="none" stroke="#2b2b2b" stroke-width="1.2"><path d="M431.6 510.9V509.0H437.4V514.0H435.2" /><rect x="429.6" y="511.79999999999995" width="5.4" height="5"/></g><rect x="431" y="508.4" width="7" height="1.8" fill="#2b2b2b"/><rect x="429" y="511.4" width="6.6" height="1.8" fill="#2b2b2b"/><path d="M450.4 509.29999999999995L457.6 516.5M457.6 509.29999999999995L450.4 516.5" stroke="#2b2b2b" stroke-width="1.9"/><g fill="none" stroke="#2b2b2b" stroke-width="1.2"><path d="M1885.6 160.9V159.0H1891.4V164.0H1889.2" /><rect x="1883.6" y="161.8" width="5.4" height="5"/></g><rect x="1885" y="158.4" width="7" height="1.8" fill="#2b2b2b"/><rect x="1883" y="161.4" width="6.6" height="1.8" fill="#2b2b2b"/><path d="M1903.9 159.3L1911.1 166.5M1911.1 159.3L1903.9 166.5" stroke="#2b2b2b" stroke-width="1.9"/><g fill="none" stroke="#2b2b2b" stroke-width="1.2"><path d="M1882.6 826.0V824.1H1888.4V829.1H1886.2" /><rect x="1880.6" y="826.9" width="5.4" height="5"/></g><rect x="1882" y="823.5" width="7" height="1.8" fill="#2b2b2b"/><rect x="1880" y="826.5" width="6.6" height="1.8" fill="#2b2b2b"/><path d="M1903.9 824.4L1911.1 831.6M1911.1 824.4L1903.9 831.6" stroke="#2b2b2b" stroke-width="1.9"/><rect x="1855" y="10.2" width="6" height="1.5" fill="#8a8a8a"/><g fill="none" stroke="#6a6a6a" stroke-width="0.9"><rect x="1881.5" y="10" width="4" height="3.5" rx="0.6"/><path d="M1883 10V8.4H1887V11.8H1885.5"/></g><path d="M1906 7L1914 15M1914 7L1906 15" stroke="#666" stroke-width="1"/></svg>
<!-- /ICONS -->
</body></html>
